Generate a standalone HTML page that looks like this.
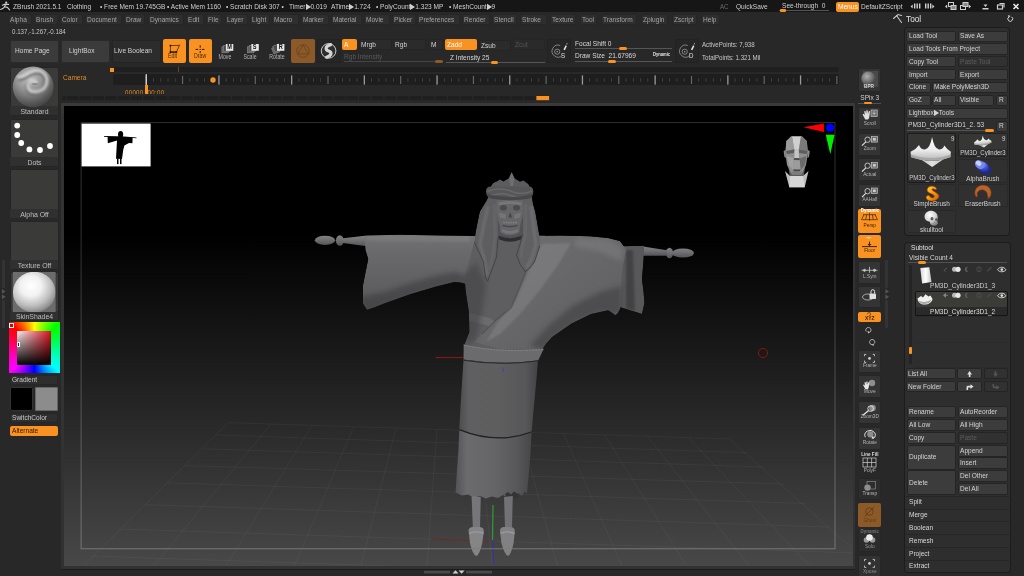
<!DOCTYPE html>
<html><head><meta charset="utf-8"><title>ZBrush</title>
<style>
html,body{margin:0;padding:0;background:#282828;}
body{width:1024px;height:576px;position:relative;overflow:hidden;font-family:"Liberation Sans",sans-serif;}
.a{position:absolute;box-sizing:border-box;}
.t{position:absolute;white-space:nowrap;transform-origin:0 50%;transform:scaleX(.82);}
svg{position:absolute;left:0;top:0;overflow:visible;}
</style></head><body>
<div class="a" style="left:0px;top:0px;width:1024px;height:12px;background:#161616;border-radius:0px;"></div>
<svg width="1024" height="576" viewBox="0 0 1024 576" style="pointer-events:none"><g fill="none" stroke="#cfcfcf" stroke-width="1.1" stroke-linecap="round" stroke-linejoin="round"><circle cx="6.2" cy="2.7" r="1.1" fill="#cfcfcf" stroke="none"/><path d="M2.4 5.2 L4.6 4.2 L8.6 4.4 M5.6 4.2 L4.6 6.8 L7.4 7.4 L9.6 9.8 M4.6 6.8 L2.8 8.6 L0.6 9.4"/></g></svg>
<span class="t" style="left:12.5px;top:1.5px;font-size:8px;line-height:10px;color:#cfcfcf;">ZBrush 2021.5.1</span>
<span class="t" style="left:67px;top:1.5px;font-size:8px;line-height:10px;color:#cfcfcf;">Clothing</span>
<span class="t" style="left:99.5px;top:1.5px;font-size:8px;line-height:10px;color:#cfcfcf;">• Free Mem 19.745GB</span>
<span class="t" style="left:167px;top:1.5px;font-size:8px;line-height:10px;color:#cfcfcf;">• Active Mem 1160</span>
<span class="t" style="left:226px;top:1.5px;font-size:8px;line-height:10px;color:#cfcfcf;">• Scratch Disk 307 •</span>
<span class="t" style="left:289px;top:1.5px;font-size:8px;line-height:10px;color:#cfcfcf;">Timer▶0.019</span>
<span class="t" style="left:330.5px;top:1.5px;font-size:8px;line-height:10px;color:#cfcfcf;">ATime▶1.724</span>
<span class="t" style="left:376px;top:1.5px;font-size:8px;line-height:10px;color:#cfcfcf;">• PolyCount▶1.323 MP</span>
<span class="t" style="left:448.5px;top:1.5px;font-size:8px;line-height:10px;color:#cfcfcf;">• MeshCount▶9</span>
<span class="t" style="left:719.5px;top:1.75px;font-size:7.5px;line-height:9.5px;color:#6a6a6a;">AC</span>
<span class="t" style="left:735.5px;top:1.5px;font-size:8px;line-height:10px;color:#cfcfcf;">QuickSave</span>
<span class="t" style="left:782px;top:0.5px;font-size:8px;line-height:10px;color:#cfcfcf;">See-through&nbsp; 0</span>
<div class="a" style="left:779px;top:10.3px;width:50px;height:0.7px;background:#555;border-radius:0px;"></div>
<div class="a" style="left:779.5px;top:9.2px;width:6.5px;height:2.4px;background:#fa9222;border-radius:1px;"></div>
<div class="a" style="left:836px;top:1.5px;width:22.5px;height:10.5px;background:#fa9222;border-radius:2px;"></div>
<span class="t" style="left:837.5px;top:1.75px;font-size:8px;line-height:10px;color:#fff;">Menus</span>
<span class="t" style="left:861px;top:1.5px;font-size:8px;line-height:10px;color:#cfcfcf;">DefaultZScript</span>
<svg width="1024" height="576" viewBox="0 0 1024 576"><g fill="#cfcfcf">
<path d="M910.5 6.5 l2.2 -2 v4z M934.5 6.5 l-2.2 -2 v4z"/>
<rect x="914" y="3.5" width="1.4" height="5"/><rect x="916.5" y="3.5" width="1.4" height="5"/><rect x="919" y="3.5" width="1.4" height="5"/>
<rect x="925" y="3.5" width="1.4" height="5"/><rect x="927.5" y="3.5" width="1.4" height="5"/><rect x="930" y="3.5" width="1.4" height="5"/>
<path d="M945 6.5 l2.2 -2 v4z M971 6.5 l-2.2 -2 v4z"/>
<rect x="948.5" y="2.5" width="5" height="4" fill="none" stroke="#cfcfcf"/><rect x="951" y="5.5" width="5" height="4" fill="#888" stroke="#cfcfcf"/>
<rect x="960.5" y="5.5" width="5" height="4" fill="none" stroke="#cfcfcf"/><rect x="963" y="2.5" width="5" height="4" fill="#888" stroke="#cfcfcf"/>
<rect x="982.5" y="8" width="6" height="1.5"/><path d="M983.5 4.5 h4 l-2 2.5z"/>
<rect x="997.5" y="5" width="5" height="4" fill="none" stroke="#cfcfcf" stroke-width="1.2"/><path d="M999.5 3.5 h4.5 v4" fill="none" stroke="#cfcfcf" stroke-width="1.2"/>
<path d="M1013.5 4 l5 5 M1018.5 4 l-5 5" stroke="#e8e8e8" stroke-width="1.6" fill="none"/>
</g></svg>
<div class="a" style="left:8.25px;top:13.5px;width:23.75px;height:11.1px;background:#2e2e2e;border-radius:2px;box-shadow:inset 0 0 0 1px #262626;"></div>
<span class="t" style="left:10.25px;top:14.5px;font-size:8px;line-height:10px;color:#a4a4a4;">Alpha</span>
<div class="a" style="left:33.7px;top:13.5px;width:24.3px;height:11.1px;background:#2e2e2e;border-radius:2px;box-shadow:inset 0 0 0 1px #262626;"></div>
<span class="t" style="left:35.7px;top:14.5px;font-size:8px;line-height:10px;color:#a4a4a4;">Brush</span>
<div class="a" style="left:60px;top:13.5px;width:22.5px;height:11.1px;background:#2e2e2e;border-radius:2px;box-shadow:inset 0 0 0 1px #262626;"></div>
<span class="t" style="left:62px;top:14.5px;font-size:8px;line-height:10px;color:#a4a4a4;">Color</span>
<div class="a" style="left:84.5px;top:13.5px;width:37.5px;height:11.1px;background:#2e2e2e;border-radius:2px;box-shadow:inset 0 0 0 1px #262626;"></div>
<span class="t" style="left:86.5px;top:14.5px;font-size:8px;line-height:10px;color:#a4a4a4;">Document</span>
<div class="a" style="left:124px;top:13.5px;width:21px;height:11.1px;background:#2e2e2e;border-radius:2px;box-shadow:inset 0 0 0 1px #262626;"></div>
<span class="t" style="left:126px;top:14.5px;font-size:8px;line-height:10px;color:#a4a4a4;">Draw</span>
<div class="a" style="left:147.5px;top:13.5px;width:36.2px;height:11.1px;background:#2e2e2e;border-radius:2px;box-shadow:inset 0 0 0 1px #262626;"></div>
<span class="t" style="left:149.5px;top:14.5px;font-size:8px;line-height:10px;color:#a4a4a4;">Dynamics</span>
<div class="a" style="left:186px;top:13.5px;width:17.7px;height:11.1px;background:#2e2e2e;border-radius:2px;box-shadow:inset 0 0 0 1px #262626;"></div>
<span class="t" style="left:188px;top:14.5px;font-size:8px;line-height:10px;color:#a4a4a4;">Edit</span>
<div class="a" style="left:205.7px;top:13.5px;width:16.8px;height:11.1px;background:#2e2e2e;border-radius:2px;box-shadow:inset 0 0 0 1px #262626;"></div>
<span class="t" style="left:207.7px;top:14.5px;font-size:8px;line-height:10px;color:#a4a4a4;">File</span>
<div class="a" style="left:224.5px;top:13.5px;width:23px;height:11.1px;background:#2e2e2e;border-radius:2px;box-shadow:inset 0 0 0 1px #262626;"></div>
<span class="t" style="left:226.5px;top:14.5px;font-size:8px;line-height:10px;color:#a4a4a4;">Layer</span>
<div class="a" style="left:249.5px;top:13.5px;width:20.5px;height:11.1px;background:#2e2e2e;border-radius:2px;box-shadow:inset 0 0 0 1px #262626;"></div>
<span class="t" style="left:251.5px;top:14.5px;font-size:8px;line-height:10px;color:#a4a4a4;">Light</span>
<div class="a" style="left:272px;top:13.5px;width:26.5px;height:11.1px;background:#2e2e2e;border-radius:2px;box-shadow:inset 0 0 0 1px #262626;"></div>
<span class="t" style="left:274px;top:14.5px;font-size:8px;line-height:10px;color:#a4a4a4;">Macro</span>
<div class="a" style="left:300.5px;top:13.5px;width:28px;height:11.1px;background:#2e2e2e;border-radius:2px;box-shadow:inset 0 0 0 1px #262626;"></div>
<span class="t" style="left:302.5px;top:14.5px;font-size:8px;line-height:10px;color:#a4a4a4;">Marker</span>
<div class="a" style="left:330.5px;top:13.5px;width:31.5px;height:11.1px;background:#2e2e2e;border-radius:2px;box-shadow:inset 0 0 0 1px #262626;"></div>
<span class="t" style="left:332.5px;top:14.5px;font-size:8px;line-height:10px;color:#a4a4a4;">Material</span>
<div class="a" style="left:364px;top:13.5px;width:26px;height:11.1px;background:#2e2e2e;border-radius:2px;box-shadow:inset 0 0 0 1px #262626;"></div>
<span class="t" style="left:366px;top:14.5px;font-size:8px;line-height:10px;color:#a4a4a4;">Movie</span>
<div class="a" style="left:391.5px;top:13.5px;width:24px;height:11.1px;background:#2e2e2e;border-radius:2px;box-shadow:inset 0 0 0 1px #262626;"></div>
<span class="t" style="left:393.5px;top:14.5px;font-size:8px;line-height:10px;color:#a4a4a4;">Picker</span>
<div class="a" style="left:417px;top:13.5px;width:43px;height:11.1px;background:#2e2e2e;border-radius:2px;box-shadow:inset 0 0 0 1px #262626;"></div>
<span class="t" style="left:419px;top:14.5px;font-size:8px;line-height:10px;color:#a4a4a4;">Preferences</span>
<div class="a" style="left:461.7px;top:13.5px;width:28.3px;height:11.1px;background:#2e2e2e;border-radius:2px;box-shadow:inset 0 0 0 1px #262626;"></div>
<span class="t" style="left:463.7px;top:14.5px;font-size:8px;line-height:10px;color:#a4a4a4;">Render</span>
<div class="a" style="left:491.7px;top:13.5px;width:25.3px;height:11.1px;background:#2e2e2e;border-radius:2px;box-shadow:inset 0 0 0 1px #262626;"></div>
<span class="t" style="left:493.7px;top:14.5px;font-size:8px;line-height:10px;color:#a4a4a4;">Stencil</span>
<div class="a" style="left:519.5px;top:13.5px;width:27.5px;height:11.1px;background:#2e2e2e;border-radius:2px;box-shadow:inset 0 0 0 1px #262626;"></div>
<span class="t" style="left:521.5px;top:14.5px;font-size:8px;line-height:10px;color:#a4a4a4;">Stroke</span>
<div class="a" style="left:549.5px;top:13.5px;width:26.5px;height:11.1px;background:#2e2e2e;border-radius:2px;box-shadow:inset 0 0 0 1px #262626;"></div>
<span class="t" style="left:551.5px;top:14.5px;font-size:8px;line-height:10px;color:#a4a4a4;">Texture</span>
<div class="a" style="left:579.5px;top:13.5px;width:17.5px;height:11.1px;background:#2e2e2e;border-radius:2px;box-shadow:inset 0 0 0 1px #262626;"></div>
<span class="t" style="left:581.5px;top:14.5px;font-size:8px;line-height:10px;color:#a4a4a4;">Tool</span>
<div class="a" style="left:601px;top:13.5px;width:36px;height:11.1px;background:#2e2e2e;border-radius:2px;box-shadow:inset 0 0 0 1px #262626;"></div>
<span class="t" style="left:603px;top:14.5px;font-size:8px;line-height:10px;color:#a4a4a4;">Transform</span>
<div class="a" style="left:641px;top:13.5px;width:27px;height:11.1px;background:#2e2e2e;border-radius:2px;box-shadow:inset 0 0 0 1px #262626;"></div>
<span class="t" style="left:643px;top:14.5px;font-size:8px;line-height:10px;color:#a4a4a4;">Zplugin</span>
<div class="a" style="left:672px;top:13.5px;width:25px;height:11.1px;background:#2e2e2e;border-radius:2px;box-shadow:inset 0 0 0 1px #262626;"></div>
<span class="t" style="left:674px;top:14.5px;font-size:8px;line-height:10px;color:#a4a4a4;">Zscript</span>
<div class="a" style="left:701px;top:13.5px;width:18.5px;height:11.1px;background:#2e2e2e;border-radius:2px;box-shadow:inset 0 0 0 1px #262626;"></div>
<span class="t" style="left:703px;top:14.5px;font-size:8px;line-height:10px;color:#a4a4a4;">Help</span>
<span class="t" style="left:11.5px;top:27.25px;font-size:7.5px;line-height:9.5px;color:#c4c4c4;">0.137<span style="color:#fa9222">,</span>-1.267<span style="color:#fa9222">,</span>-0.184</span>
<div class="a" style="left:10px;top:40px;width:48.5px;height:22.5px;background:#3b3b3b;border-radius:2px;box-shadow:inset 0 0 0 1px #2a2a2a;"></div>
<span class="t" style="left:15px;top:46.25px;font-size:8px;line-height:10px;color:#d2d2d2;">Home Page</span>
<div class="a" style="left:61px;top:40px;width:48.5px;height:22.5px;background:#3b3b3b;border-radius:2px;box-shadow:inset 0 0 0 1px #2a2a2a;"></div>
<span class="t" style="left:68.7px;top:46.25px;font-size:8px;line-height:10px;color:#d2d2d2;">LightBox</span>
<div class="a" style="left:112px;top:40px;width:48.5px;height:22.5px;background:#2c2c2c;border-radius:2px;box-shadow:inset 0 0 0 1px #242424;"></div>
<span class="t" style="left:113.7px;top:46.25px;font-size:8px;line-height:10px;color:#d2d2d2;">Live Boolean</span>
<div class="a" style="left:163.2px;top:39px;width:23.2px;height:23.8px;background:#fa9222;border-radius:2px;"></div>
<div class="a" style="left:188.7px;top:39px;width:23.4px;height:23.8px;background:#fa9222;border-radius:2px;"></div>
<svg width="1024" height="576" viewBox="0 0 1024 576">
<g stroke="#2c1a04" stroke-width="0.7" fill="none"><path d="M170.4 45.6 L179.4 45.4 L176.4 52.1 L170.4 52.1 Z"/><path d="M170.4 52.1 H176.4" stroke-width="1.3"/></g>
<g fill="#20120a"><rect x="169.6" y="44.8" width="1.6" height="1.6"/><rect x="175.6" y="51.3" width="1.6" height="1.6"/><rect x="169.6" y="51.3" width="1.6" height="1.6"/></g><rect x="178.7" y="44.7" width="1.4" height="1.4" fill="#7a4a10"/>
<g stroke="#2c1a04" stroke-width="1" fill="none"><path d="M200.2 45.3 v2.4 M200.2 51 v2.2 M195.6 49.4 h2.6 M201.8 49.4 h2.6"/><path d="M199.4 49.4 h1.6" stroke-width="0.8"/></g>
</svg>
<span class="t" style="left:168.2px;top:52.4px;font-size:6.4px;line-height:8.4px;color:#4a2a06;">Edit</span>
<span class="t" style="left:193.9px;top:52.4px;font-size:6.4px;line-height:8.4px;color:#4a2a06;">Draw</span>
<svg width="1024" height="576" viewBox="0 0 1024 576"><rect x="221.9" y="46.8" width="6.4" height="6" fill="#5a5a5a" stroke="#8e8e8e" stroke-width="0.6"/><rect x="223.7" y="45.4" width="6.4" height="6" fill="#4a4a4a" stroke="#8a8a8a" stroke-width="0.6"/><rect x="225.9" y="44" width="7.4" height="6.8" fill="#e6e6e6"/></svg>
<span class="t" style="left:225.9px;top:43.1px;font-size:6.8px;line-height:8.8px;color:#111;font-weight:bold;width:9.02px;text-align:center;">M</span>
<span class="t" style="left:212.8px;top:52.5px;font-size:6.4px;line-height:8.4px;color:#b4b4b4;width:29.27px;text-align:center;">Move</span>
<svg width="1024" height="576" viewBox="0 0 1024 576"><rect x="247.4" y="46.8" width="6.4" height="6" fill="#5a5a5a" stroke="#8e8e8e" stroke-width="0.6"/><rect x="249.2" y="45.4" width="6.4" height="6" fill="#4a4a4a" stroke="#8a8a8a" stroke-width="0.6"/><rect x="251.4" y="44" width="7.4" height="6.8" fill="#e6e6e6"/></svg>
<span class="t" style="left:251.4px;top:43.1px;font-size:6.8px;line-height:8.8px;color:#111;font-weight:bold;width:9.02px;text-align:center;">S</span>
<span class="t" style="left:238.2px;top:52.5px;font-size:6.4px;line-height:8.4px;color:#b4b4b4;width:29.27px;text-align:center;">Scale</span>
<svg width="1024" height="576" viewBox="0 0 1024 576"><g transform="rotate(-22 276.6 50.5)"><rect x="272.8" y="46.6" width="6.4" height="6.2" fill="#5a5a5a" stroke="#8e8e8e" stroke-width="0.6"/><rect x="274.6" y="45.2" width="6.4" height="6.2" fill="#4a4a4a" stroke="#8a8a8a" stroke-width="0.6"/></g><rect x="277.0" y="44" width="7.4" height="6.8" fill="#e6e6e6"/></svg>
<span class="t" style="left:277px;top:43.1px;font-size:6.8px;line-height:8.8px;color:#111;font-weight:bold;width:9.02px;text-align:center;">R</span>
<span class="t" style="left:265.2px;top:52.5px;font-size:6.4px;line-height:8.4px;color:#b4b4b4;width:29.27px;text-align:center;">Rotate</span>
<div class="a" style="left:290.9px;top:39px;width:24.2px;height:24px;background:#8c5a28;border-radius:2px;"></div>
<div class="a" style="left:316.6px;top:39px;width:24px;height:24px;background:#262626;border-radius:2px;box-shadow:inset 0 0 0 1px #222;"></div>
<svg width="1024" height="576" viewBox="0 0 1024 576">
<g stroke="#6b4520" stroke-width="0.9" fill="none"><circle cx="303" cy="51" r="6.3"/><path d="M303 45 L308.3 54 H297.7Z"/></g>
<circle cx="328.6" cy="50.9" r="7.3" fill="#2e2e2e" stroke="#dcdcdc" stroke-width="0.9"/>
<path d="M330.6 44.6 C324.6 46.4 325.4 50 328.6 51 C331.8 52 332.4 55.4 326.6 57.2" fill="none" stroke="#d4d4d4" stroke-width="3.2" stroke-linecap="round"/>
</svg>
<div class="a" style="left:342.3px;top:39.4px;width:15.1px;height:10.9px;background:#fa9222;border-radius:2px;"></div>
<span class="t" style="left:344.3px;top:39.85px;font-size:8px;line-height:10px;color:#fff;">A</span>
<div class="a" style="left:359.3px;top:39.4px;width:32.3px;height:10.9px;background:#2b2b2b;border-radius:2px;box-shadow:inset 0 0 0 1px #242424;"></div>
<span class="t" style="left:361.3px;top:39.85px;font-size:8px;line-height:10px;color:#d2d2d2;">Mrgb</span>
<div class="a" style="left:393.4px;top:39.4px;width:32.9px;height:10.9px;background:#2b2b2b;border-radius:2px;box-shadow:inset 0 0 0 1px #242424;"></div>
<span class="t" style="left:395.4px;top:39.85px;font-size:8px;line-height:10px;color:#d2d2d2;">Rgb</span>
<div class="a" style="left:427.8px;top:39.4px;width:15px;height:10.9px;background:#2b2b2b;border-radius:2px;box-shadow:inset 0 0 0 1px #242424;"></div>
<span class="t" style="left:430.8px;top:39.85px;font-size:8px;line-height:10px;color:#d2d2d2;">M</span>
<div class="a" style="left:444.6px;top:39.4px;width:32.3px;height:10.9px;background:#fa9222;border-radius:2px;"></div>
<span class="t" style="left:446.6px;top:39.85px;font-size:8px;line-height:10px;color:#fff;">Zadd</span>
<div class="a" style="left:478.8px;top:40.3px;width:32.2px;height:10.7px;background:#2b2b2b;border-radius:2px;box-shadow:inset 0 0 0 1px #242424;"></div>
<span class="t" style="left:480.8px;top:40.65px;font-size:8px;line-height:10px;color:#d2d2d2;">Zsub</span>
<div class="a" style="left:512.8px;top:39.4px;width:32.2px;height:10.9px;background:#2a2a2a;border-radius:2px;box-shadow:inset 0 0 0 1px #262626;"></div>
<span class="t" style="left:514.8px;top:39.85px;font-size:8px;line-height:10px;color:#555;">Zcut</span>
<span class="t" style="left:344px;top:51.6px;font-size:8px;line-height:10px;color:#5a5a5a;">Rgb Intensity</span>
<div class="a" style="left:344px;top:61.2px;width:99px;height:0.7px;background:#444;border-radius:0px;"></div>
<div class="a" style="left:435px;top:60px;width:8px;height:3px;background:#8c5a28;border-radius:1.5px;"></div>
<span class="t" style="left:449.7px;top:52.7px;font-size:8px;line-height:10px;color:#d8d8d8;">Z Intensity 25</span>
<div class="a" style="left:446px;top:62.3px;width:99px;height:0.7px;background:#555;border-radius:0px;"></div>
<div class="a" style="left:491px;top:61.2px;width:7px;height:3px;background:#fa9222;border-radius:1.5px;"></div>
<div class="a" style="left:547.2px;top:39px;width:23.8px;height:24.4px;background:#262626;border-radius:2px;box-shadow:inset 0 0 0 1px #222;"></div>
<div class="a" style="left:674.7px;top:39px;width:24px;height:24.4px;background:#262626;border-radius:2px;box-shadow:inset 0 0 0 1px #222;"></div>
<svg width="1024" height="576" viewBox="0 0 1024 576"><g fill="none" stroke="#9a9a9a" stroke-width="0.8"><path d="M560.2 45.5 a6 6 0 1 0 2 10"/><circle cx="557.2" cy="51.7" r="2.6"/></g><circle cx="557.2" cy="51.7" r="0.8" fill="#9a9a9a"/><path d="M563.4 49.5 l2.2 -4.2 l1.3 0.8 l-2 4.2z M566.0 44.6 l1 -1.6 l0.6 1 z" fill="#e0e0e0"/></svg>
<span class="t" style="left:561.2px;top:50.75px;font-size:7.5px;line-height:9.5px;color:#e0e0e0;">S</span>
<svg width="1024" height="576" viewBox="0 0 1024 576"><g fill="none" stroke="#9a9a9a" stroke-width="0.8"><path d="M687.7 45.5 a6 6 0 1 0 2 10"/><circle cx="684.7" cy="51.7" r="2.6"/></g><circle cx="684.7" cy="51.7" r="0.8" fill="#9a9a9a"/><path d="M690.9 49.5 l2.2 -4.2 l1.3 0.8 l-2 4.2z M693.5 44.6 l1 -1.6 l0.6 1 z" fill="#e0e0e0"/></svg>
<span class="t" style="left:688.7px;top:50.75px;font-size:7.5px;line-height:9.5px;color:#e0e0e0;">D</span>
<span class="t" style="left:574.8px;top:38.5px;font-size:8px;line-height:10px;color:#d8d8d8;">Focal Shift 0</span>
<div class="a" style="left:574.8px;top:48.3px;width:97.2px;height:0.7px;background:#555;border-radius:0px;"></div>
<div class="a" style="left:619px;top:47.2px;width:8px;height:3px;background:#fa9222;border-radius:1.5px;"></div>
<span class="t" style="left:574.8px;top:51.4px;font-size:8px;line-height:10px;color:#d8d8d8;">Draw Size&nbsp; 21.67969</span>
<div class="a" style="left:574.8px;top:61.2px;width:97.2px;height:0.7px;background:#555;border-radius:0px;"></div>
<div class="a" style="left:607.8px;top:60px;width:7.8px;height:3px;background:#fa9222;border-radius:1.5px;"></div>
<span class="t" style="left:652.8px;top:51.1px;font-size:5px;line-height:7px;color:#e6e6e6;font-weight:bold;">Dynamic</span>
<span class="t" style="left:702.3px;top:39.85px;font-size:7.5px;line-height:9.5px;color:#c8c8c8;">ActivePoints: 7,938</span>
<span class="t" style="left:702.3px;top:52.75px;font-size:7.5px;line-height:9.5px;color:#c8c8c8;">TotalPoints: 1.321 Mil</span>
<span class="t" style="left:63px;top:73px;font-size:8px;line-height:10px;color:#e08a24;">Camera</span>
<div class="a" style="left:112.5px;top:67px;width:726px;height:5px;background:#1f1f1f;border-radius:1.5px;"></div>
<div class="a" style="left:109.5px;top:68px;width:4.5px;height:4px;background:#fa9222;border-radius:0px;"></div>
<div class="a" style="left:178px;top:67px;width:0.8px;height:5px;background:#6b4520;border-radius:0px;"></div>
<div class="a" style="left:112.5px;top:73.5px;width:726px;height:11.8px;background:#1e1e1e;border-radius:2px;"></div>
<svg width="1024" height="576" viewBox="0 0 1024 576"><rect x="145.60" y="75.4" width="1.3" height="9.2" fill="#9a9a9a"/><rect x="153.12" y="78.4" width="0.7" height="3.2" fill="#4e4e4e"/><rect x="160.39" y="78.4" width="0.7" height="3.2" fill="#4e4e4e"/><rect x="167.66" y="78.4" width="0.7" height="3.2" fill="#4e4e4e"/><rect x="174.93" y="78.4" width="0.7" height="3.2" fill="#4e4e4e"/><rect x="182.05" y="76" width="1.1" height="8" fill="#6a6a6a"/><rect x="189.47" y="78.4" width="0.7" height="3.2" fill="#4e4e4e"/><rect x="196.74" y="78.4" width="0.7" height="3.2" fill="#4e4e4e"/><rect x="204.01" y="78.4" width="0.7" height="3.2" fill="#4e4e4e"/><rect x="211.28" y="78.4" width="0.7" height="3.2" fill="#4e4e4e"/><rect x="218.30" y="75.4" width="1.3" height="9.2" fill="#9a9a9a"/><rect x="225.82" y="78.4" width="0.7" height="3.2" fill="#4e4e4e"/><rect x="233.09" y="78.4" width="0.7" height="3.2" fill="#4e4e4e"/><rect x="240.36" y="78.4" width="0.7" height="3.2" fill="#4e4e4e"/><rect x="247.63" y="78.4" width="0.7" height="3.2" fill="#4e4e4e"/><rect x="254.75" y="76" width="1.1" height="8" fill="#6a6a6a"/><rect x="262.17" y="78.4" width="0.7" height="3.2" fill="#4e4e4e"/><rect x="269.44" y="78.4" width="0.7" height="3.2" fill="#4e4e4e"/><rect x="276.71" y="78.4" width="0.7" height="3.2" fill="#4e4e4e"/><rect x="283.98" y="78.4" width="0.7" height="3.2" fill="#4e4e4e"/><rect x="291.00" y="75.4" width="1.3" height="9.2" fill="#9a9a9a"/><rect x="298.52" y="78.4" width="0.7" height="3.2" fill="#4e4e4e"/><rect x="305.79" y="78.4" width="0.7" height="3.2" fill="#4e4e4e"/><rect x="313.06" y="78.4" width="0.7" height="3.2" fill="#4e4e4e"/><rect x="320.33" y="78.4" width="0.7" height="3.2" fill="#4e4e4e"/><rect x="327.45" y="76" width="1.1" height="8" fill="#6a6a6a"/><rect x="334.87" y="78.4" width="0.7" height="3.2" fill="#4e4e4e"/><rect x="342.14" y="78.4" width="0.7" height="3.2" fill="#4e4e4e"/><rect x="349.41" y="78.4" width="0.7" height="3.2" fill="#4e4e4e"/><rect x="356.68" y="78.4" width="0.7" height="3.2" fill="#4e4e4e"/><rect x="363.70" y="75.4" width="1.3" height="9.2" fill="#9a9a9a"/><rect x="371.22" y="78.4" width="0.7" height="3.2" fill="#4e4e4e"/><rect x="378.49" y="78.4" width="0.7" height="3.2" fill="#4e4e4e"/><rect x="385.76" y="78.4" width="0.7" height="3.2" fill="#4e4e4e"/><rect x="393.03" y="78.4" width="0.7" height="3.2" fill="#4e4e4e"/><rect x="400.15" y="76" width="1.1" height="8" fill="#6a6a6a"/><rect x="407.57" y="78.4" width="0.7" height="3.2" fill="#4e4e4e"/><rect x="414.84" y="78.4" width="0.7" height="3.2" fill="#4e4e4e"/><rect x="422.11" y="78.4" width="0.7" height="3.2" fill="#4e4e4e"/><rect x="429.38" y="78.4" width="0.7" height="3.2" fill="#4e4e4e"/><rect x="436.40" y="75.4" width="1.3" height="9.2" fill="#9a9a9a"/><rect x="443.92" y="78.4" width="0.7" height="3.2" fill="#4e4e4e"/><rect x="451.19" y="78.4" width="0.7" height="3.2" fill="#4e4e4e"/><rect x="458.46" y="78.4" width="0.7" height="3.2" fill="#4e4e4e"/><rect x="465.73" y="78.4" width="0.7" height="3.2" fill="#4e4e4e"/><rect x="472.85" y="76" width="1.1" height="8" fill="#6a6a6a"/><rect x="480.27" y="78.4" width="0.7" height="3.2" fill="#4e4e4e"/><rect x="487.54" y="78.4" width="0.7" height="3.2" fill="#4e4e4e"/><rect x="494.81" y="78.4" width="0.7" height="3.2" fill="#4e4e4e"/><rect x="502.08" y="78.4" width="0.7" height="3.2" fill="#4e4e4e"/><rect x="509.10" y="75.4" width="1.3" height="9.2" fill="#9a9a9a"/><rect x="516.62" y="78.4" width="0.7" height="3.2" fill="#4e4e4e"/><rect x="523.89" y="78.4" width="0.7" height="3.2" fill="#4e4e4e"/><rect x="531.16" y="78.4" width="0.7" height="3.2" fill="#4e4e4e"/><rect x="538.43" y="78.4" width="0.7" height="3.2" fill="#4e4e4e"/><rect x="545.55" y="76" width="1.1" height="8" fill="#6a6a6a"/><rect x="552.97" y="78.4" width="0.7" height="3.2" fill="#4e4e4e"/><rect x="560.24" y="78.4" width="0.7" height="3.2" fill="#4e4e4e"/><rect x="567.51" y="78.4" width="0.7" height="3.2" fill="#4e4e4e"/><rect x="574.78" y="78.4" width="0.7" height="3.2" fill="#4e4e4e"/><rect x="581.80" y="75.4" width="1.3" height="9.2" fill="#9a9a9a"/><rect x="589.32" y="78.4" width="0.7" height="3.2" fill="#4e4e4e"/><rect x="596.59" y="78.4" width="0.7" height="3.2" fill="#4e4e4e"/><rect x="603.86" y="78.4" width="0.7" height="3.2" fill="#4e4e4e"/><rect x="611.13" y="78.4" width="0.7" height="3.2" fill="#4e4e4e"/><rect x="618.25" y="76" width="1.1" height="8" fill="#6a6a6a"/><rect x="625.67" y="78.4" width="0.7" height="3.2" fill="#4e4e4e"/><rect x="632.94" y="78.4" width="0.7" height="3.2" fill="#4e4e4e"/><rect x="640.21" y="78.4" width="0.7" height="3.2" fill="#4e4e4e"/><rect x="647.48" y="78.4" width="0.7" height="3.2" fill="#4e4e4e"/><rect x="654.50" y="75.4" width="1.3" height="9.2" fill="#9a9a9a"/><rect x="662.02" y="78.4" width="0.7" height="3.2" fill="#4e4e4e"/><rect x="669.29" y="78.4" width="0.7" height="3.2" fill="#4e4e4e"/><rect x="676.56" y="78.4" width="0.7" height="3.2" fill="#4e4e4e"/><rect x="683.83" y="78.4" width="0.7" height="3.2" fill="#4e4e4e"/><rect x="690.95" y="76" width="1.1" height="8" fill="#6a6a6a"/><rect x="698.37" y="78.4" width="0.7" height="3.2" fill="#4e4e4e"/><rect x="705.64" y="78.4" width="0.7" height="3.2" fill="#4e4e4e"/><rect x="712.91" y="78.4" width="0.7" height="3.2" fill="#4e4e4e"/><rect x="720.18" y="78.4" width="0.7" height="3.2" fill="#4e4e4e"/><rect x="727.20" y="75.4" width="1.3" height="9.2" fill="#9a9a9a"/><rect x="734.72" y="78.4" width="0.7" height="3.2" fill="#4e4e4e"/><rect x="741.99" y="78.4" width="0.7" height="3.2" fill="#4e4e4e"/><rect x="749.26" y="78.4" width="0.7" height="3.2" fill="#4e4e4e"/><rect x="756.53" y="78.4" width="0.7" height="3.2" fill="#4e4e4e"/><rect x="763.65" y="76" width="1.1" height="8" fill="#6a6a6a"/><rect x="771.07" y="78.4" width="0.7" height="3.2" fill="#4e4e4e"/><rect x="778.34" y="78.4" width="0.7" height="3.2" fill="#4e4e4e"/><rect x="785.61" y="78.4" width="0.7" height="3.2" fill="#4e4e4e"/><rect x="792.88" y="78.4" width="0.7" height="3.2" fill="#4e4e4e"/><rect x="799.90" y="75.4" width="1.3" height="9.2" fill="#9a9a9a"/><rect x="807.42" y="78.4" width="0.7" height="3.2" fill="#4e4e4e"/><rect x="814.69" y="78.4" width="0.7" height="3.2" fill="#4e4e4e"/><rect x="821.96" y="78.4" width="0.7" height="3.2" fill="#4e4e4e"/><rect x="829.23" y="78.4" width="0.7" height="3.2" fill="#4e4e4e"/><rect x="836.35" y="76" width="1.1" height="8" fill="#6a6a6a"/><rect x="145.7" y="74" width="1" height="11" fill="#e8e8e8"/><circle cx="213" cy="80" r="2.7" fill="#fa9222"/><rect x="145" y="85" width="3" height="9" fill="#fa9222"/></svg>
<div class="a" style="left:120px;top:86px;width:60px;height:8px;overflow:hidden"><span class="t" style="left:5px;top:1.5px;font-size:7.5px;line-height:10px;color:#e08a24;letter-spacing:0.35px">00000&nbsp; 00:00</span></div>
<svg width="1024" height="576" viewBox="0 0 1024 576"><rect x="524.20" y="96.2" width="11.50" height="3.9" fill="#1f1f1f"/><rect x="511.50" y="96.2" width="11.50" height="3.9" fill="#1f1f1f"/><rect x="498.80" y="96.2" width="11.50" height="3.9" fill="#1f1f1f"/><rect x="486.10" y="96.2" width="11.50" height="3.9" fill="#1f1f1f"/><rect x="473.40" y="96.2" width="11.50" height="3.9" fill="#1f1f1f"/><rect x="460.70" y="96.2" width="11.50" height="3.9" fill="#1f1f1f"/><rect x="448.00" y="96.2" width="11.50" height="3.9" fill="#1f1f1f"/><rect x="435.30" y="96.2" width="11.50" height="3.9" fill="#1f1f1f"/><rect x="422.60" y="96.2" width="11.50" height="3.9" fill="#1f1f1f"/><rect x="409.90" y="96.2" width="11.50" height="3.9" fill="#1f1f1f"/><rect x="397.20" y="96.2" width="11.50" height="3.9" fill="#1f1f1f"/><rect x="384.50" y="96.2" width="11.50" height="3.9" fill="#1f1f1f"/><rect x="371.80" y="96.2" width="11.50" height="3.9" fill="#1f1f1f"/><rect x="359.10" y="96.2" width="11.50" height="3.9" fill="#1f1f1f"/><rect x="346.40" y="96.2" width="11.50" height="3.9" fill="#1f1f1f"/><rect x="333.70" y="96.2" width="11.50" height="3.9" fill="#1f1f1f"/><rect x="321.00" y="96.2" width="11.50" height="3.9" fill="#1f1f1f"/><rect x="308.30" y="96.2" width="11.50" height="3.9" fill="#1f1f1f"/><rect x="295.60" y="96.2" width="11.50" height="3.9" fill="#1f1f1f"/><rect x="282.90" y="96.2" width="11.50" height="3.9" fill="#1f1f1f"/><rect x="270.20" y="96.2" width="11.50" height="3.9" fill="#1f1f1f"/><rect x="257.50" y="96.2" width="11.50" height="3.9" fill="#1f1f1f"/><rect x="244.80" y="96.2" width="11.50" height="3.9" fill="#1f1f1f"/><rect x="232.10" y="96.2" width="11.50" height="3.9" fill="#1f1f1f"/><rect x="219.40" y="96.2" width="11.50" height="3.9" fill="#1f1f1f"/><rect x="206.70" y="96.2" width="11.50" height="3.9" fill="#1f1f1f"/><rect x="194.00" y="96.2" width="11.50" height="3.9" fill="#1f1f1f"/><rect x="181.30" y="96.2" width="11.50" height="3.9" fill="#1f1f1f"/><rect x="168.60" y="96.2" width="11.50" height="3.9" fill="#1f1f1f"/><rect x="155.90" y="96.2" width="11.50" height="3.9" fill="#1f1f1f"/><rect x="143.20" y="96.2" width="11.50" height="3.9" fill="#1f1f1f"/><rect x="130.50" y="96.2" width="11.50" height="3.9" fill="#1f1f1f"/><rect x="117.80" y="96.2" width="11.50" height="3.9" fill="#1f1f1f"/><rect x="105.10" y="96.2" width="11.50" height="3.9" fill="#1f1f1f"/><rect x="92.40" y="96.2" width="11.50" height="3.9" fill="#1f1f1f"/><rect x="79.70" y="96.2" width="11.50" height="3.9" fill="#1f1f1f"/><rect x="67.00" y="96.2" width="11.50" height="3.9" fill="#1f1f1f"/><rect x="62.70" y="96.2" width="3.10" height="3.9" fill="#1f1f1f"/><rect x="536.4" y="96" width="12.7" height="4.2" fill="#fa9222"/></svg>
<div class="a" style="left:9.6px;top:67px;width:49px;height:49px;background:#3a3a38;border-radius:2px;box-shadow:inset 0 0 0 1px #252525;"></div>
<div class="a" style="left:10.4px;top:106.4px;width:47.4px;height:8.8px;background:#303030;border-radius:1px;"></div>
<span class="t" style="left:9.6px;top:107.3px;font-size:8px;line-height:10px;color:#bdbdbd;width:56.98px;text-align:center;transform:scaleX(.86);">Standard</span>
<div class="a" style="left:9.6px;top:118.7px;width:49px;height:48.3px;background:#3a3a38;border-radius:2px;box-shadow:inset 0 0 0 1px #252525;"></div>
<div class="a" style="left:10.4px;top:157.4px;width:47.4px;height:8.8px;background:#303030;border-radius:1px;"></div>
<span class="t" style="left:9.6px;top:158.3px;font-size:8px;line-height:10px;color:#bdbdbd;width:56.98px;text-align:center;transform:scaleX(.86);">Dots</span>
<div class="a" style="left:9.6px;top:169.4px;width:49px;height:49px;background:#3a3a38;border-radius:2px;box-shadow:inset 0 0 0 1px #252525;"></div>
<div class="a" style="left:10.4px;top:208.8px;width:47.4px;height:8.8px;background:#303030;border-radius:1px;"></div>
<span class="t" style="left:9.6px;top:209.7px;font-size:8px;line-height:10px;color:#bdbdbd;width:56.98px;text-align:center;transform:scaleX(.86);">Alpha Off</span>
<div class="a" style="left:9.6px;top:221px;width:49px;height:49px;background:#3a3a38;border-radius:2px;box-shadow:inset 0 0 0 1px #252525;"></div>
<div class="a" style="left:10.4px;top:260.4px;width:47.4px;height:8.8px;background:#303030;border-radius:1px;"></div>
<span class="t" style="left:9.6px;top:261.3px;font-size:8px;line-height:10px;color:#bdbdbd;width:56.98px;text-align:center;transform:scaleX(.86);">Texture Off</span>
<div class="a" style="left:9.6px;top:271.6px;width:49px;height:49.4px;background:#3a3a38;border-radius:2px;box-shadow:inset 0 0 0 1px #252525;"></div>
<div class="a" style="left:10.4px;top:311.4px;width:47.4px;height:8.8px;background:#303030;border-radius:1px;"></div>
<span class="t" style="left:9.6px;top:312.3px;font-size:8px;line-height:10px;color:#bdbdbd;width:56.98px;text-align:center;transform:scaleX(.86);">SkinShade4</span>
<svg width="1024" height="576" viewBox="0 0 1024 576">
<defs>
<radialGradient id="gstd" cx="0.4" cy="0.28" r="0.8"><stop offset="0" stop-color="#c2c2c2"/><stop offset="0.4" stop-color="#949494"/><stop offset="0.75" stop-color="#5c5c5c"/><stop offset="1" stop-color="#383838"/></radialGradient>
<radialGradient id="gskin" cx="0.42" cy="0.35" r="0.7"><stop offset="0" stop-color="#ffffff"/><stop offset="0.35" stop-color="#f2f2f2"/><stop offset="0.7" stop-color="#bcbcbc"/><stop offset="1" stop-color="#7a7a7a"/></radialGradient>
</defs>
<filter id="lb1" x="-20%" y="-20%" width="140%" height="140%"><feGaussianBlur stdDeviation="0.8"/></filter>
<clipPath id="stdclip"><circle cx="33.2" cy="86.8" r="20.4"/></clipPath>
<circle cx="33.2" cy="86.8" r="20.4" fill="url(#gstd)"/>
<g clip-path="url(#stdclip)" fill="none" stroke-linecap="round">
<path d="M19.6 79.4 C 25 80.5, 29 73.6, 37 73 C 44 73, 46.5 79, 45 84.5 C 43.5 91, 37 94.6, 31.4 93.2 C 26 91.6, 25.4 85, 29 82.6" stroke="#3c3c3c" stroke-width="2.6" opacity="0.55" filter="url(#lb1)"/>
<path d="M18.6 77 C 24 78, 28 71, 36 70.5 C 44 70.5, 48 77, 46.5 83 C 45 90, 38 93, 32 91.5 C 27 90, 26.5 84, 30 81.5 C 32.5 80, 35.5 80.5, 36 82.5" stroke="#d6d6d6" stroke-width="3.6" opacity="0.8" filter="url(#lb1)"/>
<path d="M33 84.6 C 34 83.4, 36 83.4, 37 84.4" stroke="#4a4a4a" stroke-width="1.8" opacity="0.7" filter="url(#lb1)"/>
</g>
<g fill="#fff"><circle cx="17.2" cy="125.6" r="2.9"/><circle cx="17.2" cy="135" r="2.9"/><circle cx="21.2" cy="143" r="2.9"/><circle cx="29.4" cy="149.4" r="2.9"/><circle cx="40" cy="150" r="2.9"/><circle cx="50" cy="146" r="2.9"/></g>
<rect x="12.8" y="272" width="42.8" height="40" fill="#6c6c6c"/>
<clipPath id="skclip"><rect x="12.8" y="272" width="42.8" height="40"/></clipPath><ellipse cx="34.2" cy="292.2" rx="21.3" ry="20.4" fill="url(#gskin)" clip-path="url(#skclip)"/>
</svg>
<div class="a" style="left:8.6px;top:322px;width:51.6px;height:51px;background:conic-gradient(from 315deg at 50% 50%, #ff0000, #ffff00 12.5%, #00ff00 25%, #00ffff 50%, #0000ff 62.5%, #ff00ff 75%, #ff0000);"></div>
<div class="a" style="left:17px;top:330.5px;width:34px;height:34.5px;background:linear-gradient(to bottom, rgba(0,0,0,0), #000), linear-gradient(to right, #f4f4f4, #e01020);"></div>
<div class="a" style="left:9px;top:323px;width:5px;height:5px;border:1px solid #fff;background:#e00000"></div>
<div class="a" style="left:16.5px;top:342px;width:3px;height:5px;border:0.7px solid #fff;background:#222"></div>
<div class="a" style="left:9.5px;top:375px;width:48.9px;height:9.5px;background:#2e2e2e;border-radius:2px;box-shadow:inset 0 0 0 1px #262626;"></div>
<span class="t" style="left:11.5px;top:374.75px;font-size:8px;line-height:10px;color:#c8c8c8;">Gradient</span>
<div class="a" style="left:9.5px;top:387px;width:23.9px;height:23.8px;background:#000;border-radius:2px;box-shadow:inset 0 0 0 1px #333;"></div>
<div class="a" style="left:35.4px;top:387px;width:23px;height:23.8px;background:#8c8c8c;border-radius:2px;box-shadow:inset 0 0 0 1px #666;"></div>
<div class="a" style="left:9.5px;top:413.4px;width:48.9px;height:9.8px;background:#2e2e2e;border-radius:2px;box-shadow:inset 0 0 0 1px #262626;"></div>
<span class="t" style="left:11.5px;top:413.3px;font-size:8px;line-height:10px;color:#c8c8c8;">SwitchColor</span>
<div class="a" style="left:9.5px;top:426px;width:48.9px;height:10.4px;background:#fa9222;border-radius:2px;"></div>
<span class="t" style="left:11.5px;top:426.2px;font-size:8px;line-height:10px;color:#2a1600;">Alternate</span>
<div class="a" style="left:1.9px;top:260px;width:3.1px;height:28px;background:#333;border-radius:1px;"></div>
<div class="a" style="left:1.9px;top:300px;width:3.1px;height:28px;background:#333;border-radius:1px;"></div>
<svg width="1024" height="576" viewBox="0 0 1024 576"><path d="M5.6 291.4 l-3.6 -2.4 v4.8z M5.6 296.8 l-3.6 -2.4 v4.8z" fill="#555"/></svg>
<div class="a" style="left:61.2px;top:103px;width:794.3px;height:567px;height:467px;background:#1c1c1c;border-radius:1px"></div>
<div class="a" style="left:61.2px;top:103px;width:794.3px;height:465.6px;background:linear-gradient(to bottom,#3a3a3a,#333 3%,#323232 100%);border-radius:1px"></div>
<div class="a" style="left:64px;top:106px;width:788.6px;height:459.7px;background:linear-gradient(to bottom,#000 0%,#000 28%,#484848 100%);"></div>
<svg width="1024" height="576" viewBox="0 0 1024 576"><defs>
<clipPath id="cvclip"><rect x="64" y="106" width="788.6" height="459.7"/></clipPath>
<linearGradient id="gfr" gradientUnits="userSpaceOnUse" x1="0" y1="122" x2="0" y2="549"><stop offset="0" stop-color="#343434"/><stop offset="0.3" stop-color="#363636"/><stop offset="1" stop-color="#7c7c7c"/></linearGradient>
<filter id="b1" x="-20%" y="-20%" width="140%" height="140%"><feGaussianBlur stdDeviation="1.2"/></filter>
<filter id="b2" x="-20%" y="-20%" width="140%" height="140%"><feGaussianBlur stdDeviation="2.5"/></filter>
<filter id="b05" x="-20%" y="-20%" width="140%" height="140%"><feGaussianBlur stdDeviation="0.6"/></filter>
<linearGradient id="gsl" x1="0" y1="0" x2="0" y2="1"><stop offset="0" stop-color="#727274"/><stop offset="0.25" stop-color="#69696b"/><stop offset="0.75" stop-color="#5e5e60"/><stop offset="1" stop-color="#545456"/></linearGradient>
<linearGradient id="gsk1" x1="0" y1="0" x2="1" y2="0"><stop offset="0" stop-color="#4d4d4e"/><stop offset="0.12" stop-color="#5f5f61"/><stop offset="0.5" stop-color="#5e5e5f"/><stop offset="0.85" stop-color="#565658"/><stop offset="1" stop-color="#434345"/></linearGradient>
<linearGradient id="gsk2" x1="0" y1="0" x2="1" y2="0"><stop offset="0" stop-color="#545456"/><stop offset="0.15" stop-color="#6b6b6d"/><stop offset="0.5" stop-color="#656567"/><stop offset="0.8" stop-color="#58585a"/><stop offset="1" stop-color="#474749"/></linearGradient>
<linearGradient id="grod" x1="0" y1="0" x2="0" y2="1"><stop offset="0" stop-color="#818183"/><stop offset="0.5" stop-color="#6e6e70"/><stop offset="1" stop-color="#545456"/></linearGradient>
<linearGradient id="gdrape" x1="0" y1="0" x2="1" y2="1"><stop offset="0" stop-color="#707072"/><stop offset="0.5" stop-color="#676769"/><stop offset="1" stop-color="#5c5c5e"/></linearGradient>
<linearGradient id="ghead" x1="0" y1="0" x2="1" y2="0"><stop offset="0" stop-color="#b8b8b8"/><stop offset="0.5" stop-color="#8a8a8a"/><stop offset="1" stop-color="#5a5a5a"/></linearGradient>
</defs><g clip-path="url(#cvclip)"><path d="M228 422.6 L83.4 566 M271 424 L153.7 566 M312 425.4 L226 566 M353.7 426.7 L294.4 566 M396 428.1 L360.8 566 M437 429.4 L427 566 M478.5 430.8 L492.5 566 M520.5 432.2 L557.5 566 M563.5 433.6 L622 566 M604.5 434.9 L686.5 566 M647.5 436.3 L749 566 M688.5 437.7 L809.6 566 M729.5 439 L872 566 M228 422.6 L729.5 439 M216 435 L747 452.7 M202.6 448.8 L764.7 467 M185 465.6 L784 484 M167.4 482.8 L805.7 503.5 M146 504.7 L829 527 M118.6 529 L857 553 M91 556 L890 583" stroke="#ffffff" stroke-opacity="0.052" stroke-width="0.9" fill="none"/></g><path d="M431 539 L490 541.3" stroke="#7c2019" stroke-width="0.8"/><defs><clipPath id="figclip"><path d="M616 246.3 L644.5 245.8 L643.4 262 L642 279 L643.6 292 L644.5 303 L642 314 L634 311.5 L626 309 L616 306 Z"/><path d="M364.3 235.6 L400 234.8 L440 235.4 L478 236 L490 240 L480 275 L466 284 L460.7 282.5 L454.2 282 L436 286.4 L410 294.2 L384 303.4 L374 307.4 L367 309.8 L363 303.4 L363 285 L366 270 L368.2 259 L365.4 250 Z"/><path d="M476 235.6 L545 235.6 L552 290 L546 343 L541 352 L500 354 L464.6 347 L464.6 344.2 L469.4 332 L469 312.6 L466 293 L464.6 279 Z"/><path d="M530 236 L560 235.4 L590 236.2 L608 238 L620 241 L626.2 249.4 L623 265 L621.4 278.6 L621.6 296 L620 309 L617.6 313.4 L615.3 315.2 L611 312 L608 310.2 L591 313.9 L571.5 323.6 L552 337 L541 349.5 L500 349 L474 341.8 L482 334 L496 320 L510.8 307.8 L521 284 L530 261.6 L538 248Z"/><path d="M488.7 197 L497.8 199 L498.2 237 L496.5 257 L491 272 L487.6 281.5 L485.5 277 L483.5 262 L478 250 L474.4 242 L475.5 232.7 L479.7 211.8Z"/><path d="M531 197 L523.2 199 L522.8 234 L519.5 246 L516.5 255 L520 264 L525.2 271.5 L530 268 L534.5 262 L539.8 246 L539.4 235.4 L535.3 211.8Z"/><rect x="487" y="196" width="46" height="44"/></clipPath></defs><g><g fill="url(#grod)"><ellipse cx="325" cy="240.3" rx="10.2" ry="4.6"/><ellipse cx="339.8" cy="240.5" rx="3.9" ry="5.3"/><path d="M365 235.8 L343 238.2 L343 243 L365 246Z"/><ellipse cx="683" cy="253" rx="11" ry="4.6"/><ellipse cx="669.5" cy="253" rx="3.6" ry="5.2"/><path d="M643 246.4 L667 250.2 L667 255.8 L643 255.8Z"/></g><g clip-path="url(#figclip)"><path d="M616 246.3 L644.5 245.8 L643.4 262 L642 279 L643.6 292 L644.5 303 L642 314 L634 311.5 L626 309 L616 306 Z" fill="#58585a"/><path d="M626 250 L633 250 L635 311 L626 309Z" fill="#434345" filter="url(#b1)"/><path d="M364.3 235.6 L400 234.8 L440 235.4 L478 236 L490 240 L480 275 L466 284 L460.7 282.5 L454.2 282 L436 286.4 L410 294.2 L384 303.4 L374 307.4 L367 309.8 L363 303.4 L363 285 L366 270 L368.2 259 L365.4 250 Z" fill="url(#gsl)"/><path d="M476 235.6 L545 235.6 L552 290 L546 343 L541 352 L500 354 L464.6 347 L464.6 344.2 L469.4 332 L469 312.6 L466 293 L464.6 279 Z" fill="#5e5e60"/><path d="M469 312.6 L490 318 L503 327 L500 333 L486 325 L469.4 321Z" fill="#6e6e70" opacity="0.8" filter="url(#b05)"/><path d="M530 236 L560 235.4 L590 236.2 L608 238 L620 241 L626.2 249.4 L623 265 L621.4 278.6 L621.6 296 L620 309 L617.6 313.4 L615.3 315.2 L611 312 L608 310.2 L591 313.9 L571.5 323.6 L552 337 L541 349.5 L500 349 L474 341.8 L482 334 L496 320 L510.8 307.8 L521 284 L530 261.6 L538 248Z" fill="url(#gdrape)"/><path d="M571 243 L560 262 L540 290 L520 314 L500 334 L486 342 L498 322 L514 304 L524 282 L534 258 L542 244Z" fill="#909092" opacity="0.4" filter="url(#b1)"/><path d="M530 262 L521 284 L511 308 L496 320 L482 334" stroke="#454547" stroke-width="1.4" fill="none" opacity="0.5" filter="url(#b05)"/><path d="M544 350 L556 336 L573 324 L592 315 L608 311.5 L616 316 L621 310 L622 286 L600 292 L572 306 L548 326 L530 346Z" fill="#404042" opacity="0.6" filter="url(#b2)"/><path d="M575 238 L610 240 L623 248 L622 262 L600 252 L575 247Z" fill="#878789" opacity="0.4" filter="url(#b2)"/><path d="M360 297 L384 292 L410 283 L436 275.5 L456 272 L466 278 L456 285 L436 290 L410 298 L384 307 L367 313 L360 306Z" fill="#3e3e3f" opacity="0.6" filter="url(#b2)"/><path d="M366 234 L470 235 L470 242 L366 241Z" fill="#838385" opacity="0.5" filter="url(#b1)"/><path d="M460 280 L476 262 L486 285 L482 312 L476 340 L464.6 346 L465 332 L465 312.6 L462 293Z" fill="#414143" opacity="0.55" filter="url(#b2)"/><path d="M488 196 L532 196 L534 238 L486 238Z" fill="#525254"/><path d="M488.7 197 L497.8 199 L498.2 237 L496.5 257 L491 272 L487.6 281.5 L485.5 277 L483.5 262 L478 250 L474.4 242 L475.5 232.7 L479.7 211.8Z" fill="#5e5e60"/><path d="M531 197 L523.2 199 L522.8 234 L519.5 246 L516.5 255 L520 264 L525.2 271.5 L530 268 L534.5 262 L539.8 246 L539.4 235.4 L535.3 211.8Z" fill="#606062"/><path d="M488 206 L484 224 L480 244 L484 258 L487.4 276" stroke="#78787a" stroke-width="3" fill="none" opacity="0.6" filter="url(#b1)"/><path d="M494.5 204 L495 236 L493 256 L489.5 270" stroke="#727274" stroke-width="2.4" fill="none" opacity="0.55" filter="url(#b1)"/><path d="M531 206 L533.5 226 L536 244 L532 258 L526.4 268" stroke="#7a7a7c" stroke-width="3" fill="none" opacity="0.6" filter="url(#b1)"/><path d="M526 204 L525.6 234 L521.6 250 L521 258" stroke="#727274" stroke-width="2.2" fill="none" opacity="0.55" filter="url(#b1)"/><path d="M474.4 242 L478 250 L483.5 262 L485.5 277 L487.6 281.5 L491 272 L496.5 257 L498.2 237" stroke="#3a3a3c" stroke-width="1" fill="none" opacity="0.7" filter="url(#b05)"/><path d="M539.8 246 L534.5 262 L530 268 L525.2 271.5 L520 264 L516.5 255 L519.5 246 L522.8 234" stroke="#3a3a3c" stroke-width="1" fill="none" opacity="0.7" filter="url(#b05)"/></g><path d="M463.7 344.4 Q498 352.4 543.8 348.8 L538.2 360.6 Q500 365.4 463.5 359.6 Z" fill="#6b6b6d"/><path d="M463.7 345 Q498 353 543.8 349.4" stroke="#8a8a8c" stroke-width="0.8" stroke-dasharray="2 1" fill="none"/><path d="M463.5 359.8 Q500 365.6 538 360.4 L536.4 380 L533.6 410 L531.6 431.6 Q497 444.6 459.3 429.2 L460.6 405 L462.2 380Z" fill="url(#gsk1)"/><path d="M463.5 360.2 Q500 366 538 360.8" stroke="#29292b" stroke-width="1.1" fill="none"/><path d="M459.3 429.4 Q497 444.8 531.6 431.8 L530.4 455 L528.4 478 L527 493.5 L524.5 491.5 L522 496 L519 493 L516 497 L512 494.5 L508 497.5 L503 495 L498 498 L492 496.5 L486 498.5 L480 496 L474 497.5 L468 494.5 L462 495.5 L455.6 492.5 L457 470 L458.4 450Z" fill="url(#gsk2)"/><path d="M459.3 429.6 Q497 445 531.6 432" stroke="#212123" stroke-width="1.2" fill="none"/><path d="M505 494 l3 -2 l3 2.5 l3 -3 l3.5 2 l2 3 l-5 2 l-4 0 l-4 -1z" fill="#343436"/><path d="M471.6 496 L480.8 497 L480 527 L472.8 527Z" fill="#767678"/><path d="M504 497 L512.8 496 L512 527 L505 527Z" fill="#727274"/><path d="M468.6 531 Q468.2 527.4 472.5 527 L480 527 Q484 527.4 483.8 531.5 L482.3 543 Q479.5 555 476.4 556 Q472.6 555 470 543Z" fill="#858587"/><path d="M500 531 Q499.7 527.4 504 527 L511 527 Q515 527.4 514.8 531.5 L513.6 543 Q511 555 508 556 Q504.6 555 501.4 543Z" fill="#818183"/><path d="M469.2 533.4 Q476 530.4 483.6 533.4 M500.6 533.4 Q507 530.4 514.6 533.4" stroke="#9d9d9f" stroke-width="1.3" fill="none"/><path d="M496.4 203 Q496.6 198.8 500 198.8 L520 198.8 Q523.5 198.8 523.5 203 L523.2 214 L521.4 221 L520 226 L519.6 232 Q516 235.2 510 235.2 Q503.8 235.2 500.2 232 L499.9 226 L498.4 221 L496.7 214Z" fill="#666668"/><path d="M498.6 202.6 Q510 199.6 521.4 202.6 L521 205.2 Q510 202.6 499 205.2Z" fill="#7c7c7e" opacity="0.8" filter="url(#b05)"/><ellipse cx="503.4" cy="207.8" rx="3.5" ry="2.8" fill="#4c4c4e"/><ellipse cx="516.5" cy="207.8" rx="3.5" ry="2.8" fill="#4c4c4e"/><path d="M510.2 212.6 l-2 4.8 h4z" fill="#464648"/><path d="M499 212.6 L506 214.4 L505.2 219 L500 217.6Z M521 212.6 L514 214.4 L514.8 219 L520 217.6Z" fill="#7c7c7e" opacity="0.7" filter="url(#b05)"/><path d="M502.6 225.4 Q510 228 517.4 225.4" stroke="#454547" stroke-width="1.2" fill="none"/><path d="M503.2 222.6 h13.6" stroke="#808082" stroke-width="1.8"/><path d="M505.4 221.6 v2.2 M507.7 221.6 v2.2 M510 221.6 v2.2 M512.3 221.6 v2.2 M514.6 221.6 v2.2" stroke="#545456" stroke-width="0.5"/><path d="M501.8 229 Q510 233 518.2 229 L517.8 232 Q510 235.6 502.2 232Z" fill="#7a7a7c" opacity="0.8"/><path d="M498.4 235.8 Q510 240.6 521.6 235.8 L520.6 239.4 Q510 244 499.4 239.4Z" fill="#2e2e30" filter="url(#b05)"/><path d="M490.8 187 Q492 182.8 497 181.4 L499.9 179.6 L503.4 181.6 L508.6 178.4 L511.7 172 L514.8 178.4 L520 181.8 L523.5 180.4 L526 182.6 Q529 184 529.7 187Z" fill="#5c5c5e"/><path d="M509.2 179 L511.7 172.6 L514.2 179 L513 186 L510.4 186Z" fill="#747476" opacity="0.8"/><path d="M486 191 Q486.2 186.8 491 186.6 L529 186.6 Q533.2 186.8 533.3 191.4 Q533.4 197.4 528 198.6 Q510 201.6 491.4 198.6 Q486 197.4 486 191Z" fill="#57575a"/><path d="M487.4 191.4 Q500 186.4 512 191.6 Q522 195.6 532 191 M489 196.4 Q500 191.4 511 195.6 Q521 199 530 196" stroke="#6e6e70" stroke-width="1.3" fill="none" opacity="0.85" filter="url(#b05)"/><path d="M487 194 Q487.6 198 492 198.8 Q510 201.6 527.6 198.8 Q532.4 198 533 194 Q510 200.4 487 194Z" fill="#434345" opacity="0.8"/></g><path d="M435.6 357.6 L464 357.6" stroke="#9a1a14" stroke-width="0.9"/><path d="M502.6 367.5 l1.1 4.6" stroke="#3a3ad0" stroke-width="0.8"/><path d="M493 505 L492.6 540" stroke="#2fae2f" stroke-width="1"/><path d="M492.6 540 L493.8 565" stroke="#3030b0" stroke-width="0.9"/><circle cx="763" cy="353" r="4.6" fill="none" stroke="#8c1410" stroke-width="1"/><rect x="81.1" y="122.6" width="753.9" height="426.2" fill="none" stroke="url(#gfr)" stroke-width="0.9"/><rect x="81.6" y="123.6" width="69" height="42.8" fill="#fff"/><g fill="#000"><ellipse cx="120.6" cy="134.6" rx="2.6" ry="3.6"/><path d="M104 136 L117 136.2 L124 136.4 L136.5 137.4 L136.5 138.2 L132.6 138 L132.4 143.2 L129 143 L124.4 145.5 L123.2 150 L122 159 L116 158.8 L116.6 148 L117 140.6 L112 142 L107.8 143.2 L107.6 137 L104 136.8Z"/><rect x="117" y="158.5" width="1.5" height="5.6"/><rect x="120" y="158.5" width="1.5" height="5.6"/></g><path d="M803.6 127.2 L823.9 123.4 L823.9 131.9Z" fill="#ff0000"/><circle cx="830.1" cy="127.6" r="4.2" fill="#0000ff"/><path d="M825.8 134.7 L834.6 134.7 L830.3 154.2Z" fill="#00ee00"/><g>
<path d="M788 164 L805.5 164 L803.5 178 L790 178Z" fill="#5c5c5c"/><path d="M785 171 L790 176 L803 176 L808.5 171 L804.7 187.3 L789.3 187.3Z" fill="#bdbdbd"/>
<path d="M790 176 L803 176 L804.7 187.3 L789.3 187.3Z" fill="#d6d6d6"/>
<path d="M783.6 151 L785.6 150 L786 158 L784.4 157Z M809.8 151 L807.8 150 L807.4 158 L809 157Z" fill="#8a8a8a"/>
<path d="M791 136.2 L802 136.2 L806.8 141 L808 152 L806 165 L801.5 174.5 L792 174.5 L787 165 L785.2 152 L786.4 141Z" fill="#8e8e8e"/>
<path d="M792 136.5 L801 136.5 L799 149 L794.2 149Z" fill="#cfcfcf"/>
<path d="M786.4 141 L792 136.5 L794.2 149 L786 151Z" fill="#9a9a9a"/>
<path d="M801 136.5 L806.8 141 L807.4 151 L799 149Z" fill="#7a7a7a"/>
<path d="M794.6 149 L798.6 149 L799 158 L794.4 158Z" fill="#c4c4c4"/>
<path d="M786 151 L794.2 149.6 L794 153 L787 154Z M799 149.6 L807.4 151 L806.6 154 L799.2 153Z" fill="#5c5c5c"/>
<path d="M787 156 L794 158.5 L793 170 L789 165Z" fill="#a2a2a2"/>
<path d="M799.4 158.5 L806.4 156 L805 165 L800.6 170Z" fill="#6a6a6a"/>
<path d="M794.4 158 L799 158 L800 160 L793.6 160Z" fill="#4e4e4e"/>
<path d="M793.8 160.5 L799.8 160.5 L800.4 169 L793.2 169Z" fill="#9c9c9c"/>
<path d="M793 169.6 L800.6 169.6 L799.6 171.4 L794 171.4Z" fill="#4a4a4a"/>
<path d="M792 171.5 L801.5 171.5 L801.5 174.5 L792 174.5Z" fill="#7c7c7c"/>
</g></svg>
<svg width="1024" height="576" viewBox="0 0 1024 576"><rect x="424" y="570.8" width="26" height="2.6" fill="#4a4a4a"/><rect x="466" y="570.8" width="26" height="2.6" fill="#4a4a4a"/><path d="M452.5 573.6 l3 -3.4 l3 3.4z" fill="#cfcfcf"/><path d="M458.6 570.4 h6 l-3 3.4z" fill="#cfcfcf"/></svg>
<div class="a" style="left:857.7px;top:68px;width:23.6px;height:24px;background:#343434;border-radius:2px;box-shadow:inset 0 0 0 1px #262626;"></div>
<span class="t" style="left:857.7px;top:92.9px;font-size:8px;line-height:10px;color:#d0d0d0;width:28.78px;text-align:center;">SPix 3</span>
<div class="a" style="left:858px;top:102.7px;width:23px;height:0.7px;background:#505050;border-radius:0px;"></div>
<div class="a" style="left:864px;top:101.6px;width:7.5px;height:2.8px;background:#fa9222;border-radius:1.4px;"></div>
<div class="a" style="left:857.7px;top:107px;width:23.6px;height:23.3px;background:#343434;border-radius:2px;box-shadow:inset 0 0 0 1px #262626;"></div>
<span class="t" style="left:857.7px;top:119.6px;font-size:5.8px;line-height:7.8px;color:#b4b4b4;width:28.78px;text-align:center;">Scroll</span>
<div class="a" style="left:857.7px;top:132.6px;width:23.6px;height:23.2px;background:#343434;border-radius:2px;box-shadow:inset 0 0 0 1px #262626;"></div>
<span class="t" style="left:857.7px;top:145.1px;font-size:5.8px;line-height:7.8px;color:#b4b4b4;width:28.78px;text-align:center;">Zoom</span>
<div class="a" style="left:857.7px;top:158.2px;width:23.6px;height:23.3px;background:#343434;border-radius:2px;box-shadow:inset 0 0 0 1px #262626;"></div>
<span class="t" style="left:857.7px;top:170.8px;font-size:5.8px;line-height:7.8px;color:#b4b4b4;width:28.78px;text-align:center;">Actual</span>
<div class="a" style="left:857.7px;top:183.8px;width:23.6px;height:23.2px;background:#343434;border-radius:2px;box-shadow:inset 0 0 0 1px #262626;"></div>
<span class="t" style="left:857.7px;top:196.3px;font-size:5.8px;line-height:7.8px;color:#b4b4b4;width:28.78px;text-align:center;">AAHalf</span>
<div class="a" style="left:857.7px;top:209.4px;width:23.6px;height:23.2px;background:#fa9222;border-radius:2px;"></div>
<span class="t" style="left:857.7px;top:221.9px;font-size:5.8px;line-height:7.8px;color:#3a2206;width:28.78px;text-align:center;">Persp</span>
<div class="a" style="left:857.7px;top:234.6px;width:23.6px;height:23.4px;background:#fa9222;border-radius:2px;"></div>
<span class="t" style="left:857.7px;top:247.3px;font-size:5.8px;line-height:7.8px;color:#3a2206;width:28.78px;text-align:center;">Floor</span>
<div class="a" style="left:857.7px;top:261px;width:23.6px;height:23px;background:#343434;border-radius:2px;box-shadow:inset 0 0 0 1px #262626;"></div>
<span class="t" style="left:857.7px;top:273.3px;font-size:5.8px;line-height:7.8px;color:#b4b4b4;width:28.78px;text-align:center;">L.Sym</span>
<div class="a" style="left:857.7px;top:286.2px;width:23.6px;height:22.2px;background:#343434;border-radius:2px;box-shadow:inset 0 0 0 1px #262626;"></div>
<div class="a" style="left:857.7px;top:311.8px;width:23.6px;height:10.6px;background:#fa9222;border-radius:2px;"></div>
<span class="t" style="left:857.7px;top:313.6px;font-size:6px;line-height:8px;color:#3a2206;font-weight:bold;width:28.78px;text-align:center;">XYZ</span>
<div class="a" style="left:857.7px;top:349.6px;width:23.6px;height:23px;background:#343434;border-radius:2px;box-shadow:inset 0 0 0 1px #262626;"></div>
<span class="t" style="left:857.7px;top:361.9px;font-size:5.8px;line-height:7.8px;color:#b4b4b4;width:28.78px;text-align:center;">Frame</span>
<div class="a" style="left:857.7px;top:375.3px;width:23.6px;height:22.9px;background:#343434;border-radius:2px;box-shadow:inset 0 0 0 1px #262626;"></div>
<span class="t" style="left:857.7px;top:387.5px;font-size:5.8px;line-height:7.8px;color:#b4b4b4;width:28.78px;text-align:center;">Move</span>
<div class="a" style="left:857.7px;top:401.3px;width:23.6px;height:22.7px;background:#343434;border-radius:2px;box-shadow:inset 0 0 0 1px #262626;"></div>
<span class="t" style="left:857.7px;top:413.3px;font-size:5.8px;line-height:7.8px;color:#b4b4b4;width:28.78px;text-align:center;">Zoom3D</span>
<div class="a" style="left:857.7px;top:426.5px;width:23.6px;height:23.2px;background:#343434;border-radius:2px;box-shadow:inset 0 0 0 1px #262626;"></div>
<span class="t" style="left:857.7px;top:439px;font-size:5.8px;line-height:7.8px;color:#b4b4b4;width:28.78px;text-align:center;">Rotate</span>
<span class="t" style="left:856.7px;top:450.7px;font-size:5.6px;line-height:7.6px;color:#d8d8d8;font-weight:bold;width:31.22px;text-align:center;">Line Fill</span>
<span class="t" style="left:857.7px;top:466.6px;font-size:5.8px;line-height:7.8px;color:#b4b4b4;width:28.78px;text-align:center;">PolyF</span>
<div class="a" style="left:857.7px;top:477.8px;width:23.6px;height:22.6px;background:#2d2d2d;border-radius:2px;box-shadow:inset 0 0 0 1px #262626;"></div>
<span class="t" style="left:857.7px;top:489.7px;font-size:5.8px;line-height:7.8px;color:#b8b8b8;width:28.78px;text-align:center;">Transp</span>
<div class="a" style="left:857.7px;top:503px;width:23.6px;height:24.2px;background:#8c5a28;border-radius:2px;"></div>
<span class="t" style="left:857.7px;top:516.5px;font-size:5.8px;line-height:7.8px;color:#5e3a14;width:28.78px;text-align:center;">Ghost</span>
<div class="a" style="left:857.7px;top:528.6px;width:23.6px;height:23px;background:#2c2c2c;border-radius:2px;box-shadow:inset 0 0 0 1px #262626;"></div>
<span class="t" style="left:856.7px;top:527.7px;font-size:5.4px;line-height:7.4px;color:#707070;font-weight:bold;width:31.22px;text-align:center;">Dynamic</span>
<span class="t" style="left:857.7px;top:543.1px;font-size:5.8px;line-height:7.8px;color:#9a9a9a;width:28.78px;text-align:center;">Solo</span>
<div class="a" style="left:857.7px;top:554.6px;width:23.6px;height:25.4px;background:#323232;border-radius:2px;box-shadow:inset 0 0 0 1px #262626;"></div>
<span class="t" style="left:857.7px;top:567.6px;font-size:5.8px;line-height:7.8px;color:#8c8c8c;width:28.78px;text-align:center;">Xpose</span>
<svg width="1024" height="576" viewBox="0 0 1024 576"><defs><radialGradient id="gbpr" cx="0.4" cy="0.35" r="0.7"><stop offset="0" stop-color="#b0b0b0"/><stop offset="0.6" stop-color="#6e6e6e"/><stop offset="1" stop-color="#3c3c3c"/></radialGradient></defs><rect x="863" y="71" width="15" height="16" fill="#4a4a4a"/><circle cx="868.3" cy="78.5" r="7" fill="url(#gbpr)"/><g fill="#e0e0e0"><path d="M864.5 118 l-2 -3.5 l1 -0.8 l1.3 1.5 l-0.6 -4 l1.2 -0.3 l0.8 3 l0.2 -3.6 l1.3 0 l0.3 3.6 l0.9 -3 l1.2 0.4 l-0.7 4.6 c0 2 -0.6 3 -1.6 3.6 h-2.6z"/></g><rect x="871" y="110" width="6.2" height="6.6" fill="#6e6e6e" stroke="#d4d4d4" stroke-width="0.6"/><path d="M874.1 111.2 v4.2 M872.4 113.3 h3.4" stroke="#d4d4d4" stroke-width="0.6"/><g transform="translate(0 -0.8)"><circle cx="867.6" cy="140.5" r="2.7" fill="none" stroke="#e0e0e0" stroke-width="0.8"/><path d="M865.8 142.7 l-3.8 3.8" stroke="#e0e0e0" stroke-width="1.2"/><rect x="871.3" y="137.3" width="6.2" height="5.6" fill="#6e6e6e" stroke="#d4d4d4" stroke-width="0.6"/><rect x="873" y="138.9" width="2.8" height="2.4" fill="#cfcfcf"/></g><g transform="translate(0 -0.8)"><circle cx="867.6" cy="166.5" r="2.7" fill="none" stroke="#e0e0e0" stroke-width="0.8"/><path d="M865.8 168.7 l-3.8 3.8" stroke="#e0e0e0" stroke-width="1.2"/><rect x="871.3" y="163.3" width="6.2" height="5.6" fill="#6e6e6e" stroke="#d4d4d4" stroke-width="0.6"/><rect x="873" y="164.9" width="2.8" height="2.4" fill="#cfcfcf"/></g><g transform="translate(0 -0.8)"><circle cx="867.6" cy="192" r="2.7" fill="none" stroke="#e0e0e0" stroke-width="0.8"/><path d="M865.8 194.2 l-3.8 3.8" stroke="#e0e0e0" stroke-width="1.2"/><rect x="871.3" y="188.8" width="6.2" height="5.6" fill="#6e6e6e" stroke="#d4d4d4" stroke-width="0.6"/><rect x="873" y="190.4" width="2.8" height="2.4" fill="#cfcfcf"/></g><g transform="translate(0 -1.8)" stroke="#3a2206" stroke-width="0.7" fill="none"><path d="M863 216.5 h13 M861.5 221.5 h16 M864 216.5 l-2.5 5 M875 216.5 l2.5 5 M869.5 214.5 v8 M866.7 216.5 l-1 5 M872.3 216.5 l1 5"/></g><g stroke="#3a2206" stroke-width="1" fill="none"><path d="M862 246.6 h15 M869.5 241.5 v3.5"/></g><path d="M867.5 244 h4 l-2 2.2z" fill="#3a2206"/><path d="M866.5 237.5 h1.5 l0.7 1 l0.7 -1 h1.5" stroke="#fff" stroke-width="0.7" fill="none"/><g transform="translate(0 -1.2)" stroke="#c8c8c8" stroke-width="0.8" fill="#c8c8c8"><path d="M861.5 271.5 h16" fill="none"/><circle cx="864.5" cy="271.5" r="1.1"/><circle cx="874.5" cy="271.5" r="1.1"/><path d="M869.5 268 v6" fill="none"/></g><g transform="translate(0 -2)"><ellipse cx="868" cy="299" rx="5.5" ry="3" fill="none" stroke="#bdbdbd" stroke-width="0.8"/><rect x="869.5" y="295.5" width="6.5" height="5.5" rx="0.8" fill="#e0e0e0"/><path d="M871 295.5 v-2 a1.8 1.8 0 0 1 3.6 0 v2" fill="none" stroke="#e0e0e0" stroke-width="1"/></g><g fill="none" stroke="#cfcfcf" stroke-width="0.8"><path d="M866.2 331.5 a2.6 2.6 0 1 1 2.2 1.2"/><path d="M874.4 343.5 a2.6 2.6 0 1 0 -2.2 1.2"/></g><path d="M867.3 331 l1 2.6 l1.2 -1.8z M874.2 345.8 l-2.6 -0.8 l1.8 -1.4z" fill="#cfcfcf"/><path d="M867.5 314.3 a1.6 1.6 0 1 1 1.6 1.4" fill="none" stroke="#3a2206" stroke-width="0.6"/><g stroke="#d8d8d8" stroke-width="0.8" fill="none"><path d="M864.5 356.2 v-1.8 h1.8 M872.7 354.4 h1.8 v1.8 M874.5 360.6 v1.8 h-1.8 M866.3 362.4 h-1.8 v-1.8"/></g><circle cx="869.5" cy="358.4" r="1.3" fill="#d8d8d8"/><circle cx="872" cy="383" r="3.2" fill="#8e8e8e"/><g fill="#e6e6e6" transform="translate(866 386) scale(0.85) translate(-866 -387.6)"><path d="M864.5 390 l-2 -3.5 l1 -0.8 l1.3 1.5 l-0.6 -4 l1.2 -0.3 l0.8 3 l0.2 -3.6 l1.3 0 l0.3 3.6 l0.9 -3 l1.2 0.4 l-0.7 4.6 c0 2 -0.6 3 -1.6 3.6 h-2.6z"/></g><g transform="translate(0 -1)"><circle cx="872.5" cy="409" r="3.3" fill="#8e8e8e"/><circle cx="870.6" cy="409.6" r="2.8" fill="none" stroke="#e6e6e6" stroke-width="0.9"/><path d="M868.6 411.6 l-5.6 4.6" stroke="#e6e6e6" stroke-width="1.3"/></g><g transform="translate(869.5 436) scale(0.82) translate(-869.5 -438.6)"><circle cx="870.5" cy="436.5" r="3.8" fill="#8e8e8e"/><path d="M864.5 440 a6.5 5.5 0 1 1 9.5 1.8" fill="none" stroke="#e6e6e6" stroke-width="1.2"/><path d="M875.8 439.5 l-3.4 3.2 l-0.2 -3.6z" fill="#e6e6e6"/></g><g stroke="#d0d0d0" stroke-width="0.7" fill="none"><rect x="863" y="458" width="13" height="9"/><path d="M867.3 458 v9 M871.6 458 v9 M863 462.5 h13"/></g><rect x="867" y="481.5" width="8.5" height="7.5" fill="none" stroke="#8a8a8a" stroke-width="0.7"/><circle cx="867.5" cy="487.6" r="3.2" fill="#8e8e8e"/><g stroke="#5e3a14" stroke-width="0.8" fill="none"><circle cx="869.4" cy="511.6" r="3.8"/><path d="M864.6 516.4 l9.6 -9.6"/></g><circle cx="866.5" cy="540" r="2.8" fill="#9a9a9a"/><circle cx="872.5" cy="540" r="2.8" fill="#9a9a9a"/><circle cx="869.5" cy="537.5" r="3.3" fill="#ededed"/><g stroke="#d8d8d8" stroke-width="0.8" fill="none"><path d="M864.5 561.2 v-1.8 h1.8 M872.7 559.4 h1.8 v1.8 M874.5 565.6 v1.8 h-1.8 M866.3 567.4 h-1.8 v-1.8"/></g><circle cx="869.5" cy="563.4" r="1.3" fill="#d8d8d8"/></svg>
<span class="t" style="left:864.2px;top:83.4px;font-size:5.8px;line-height:7.8px;color:#d8d8d8;font-weight:bold;">BPR</span>
<span class="t" style="left:860.3px;top:207.1px;font-size:5.4px;line-height:7.4px;color:#fff;font-weight:bold;width:24.39px;text-align:center;">Dynamic</span>
<div class="a" style="left:885px;top:260px;width:3.4px;height:28px;background:#333;border-radius:1px;"></div>
<div class="a" style="left:885px;top:300px;width:3.4px;height:28px;background:#333;border-radius:1px;"></div>
<svg width="1024" height="576" viewBox="0 0 1024 576"><path d="M889 291.4 l-3.6 -2.4 v4.8z M889 296.8 l-3.6 -2.4 v4.8z" fill="#555"/></svg>
<svg width="1024" height="576" viewBox="0 0 1024 576"><g stroke="#c8c8c8" stroke-width="1.1" fill="none" stroke-linecap="round"><path d="M896.5 15.5 l5 7"/><path d="M893.5 18.5 l4.5 -4 l3.5 1"/></g><g stroke="#d8d8d8" stroke-width="1" fill="none"><path d="M1008.8 17 a2.4 2.4 0 1 0 2.6 -0.2"/></g><path d="M1007.8 15.3 l2.6 0.4 l-1.5 2z" fill="#d8d8d8"/></svg>
<span class="t" style="left:906.4px;top:13.6px;font-size:9.2px;line-height:11.2px;color:#e4e4e4;transform:scaleX(.9);">Tool</span>
<div class="a" style="left:903.6px;top:27.4px;width:106.8px;height:209.1px;background:#2e2e2e;border-radius:4px;box-shadow:inset 0 0 0 1px #1c1c1c;"></div>
<div class="a" style="left:906.4px;top:30.5px;width:49.9px;height:11.2px;background:#3c3c3c;border-radius:2px;box-shadow:inset 0 0 0 1px #242424;"></div>
<span class="t" style="left:908.5px;top:31.1px;font-size:8px;line-height:10px;color:#d4d4d4;">Load Tool</span>
<div class="a" style="left:957.5px;top:30.5px;width:50.1px;height:11.2px;background:#3c3c3c;border-radius:2px;box-shadow:inset 0 0 0 1px #242424;"></div>
<span class="t" style="left:959.6px;top:31.1px;font-size:8px;line-height:10px;color:#d4d4d4;">Save As</span>
<div class="a" style="left:906.4px;top:43.4px;width:101.2px;height:11.2px;background:#3c3c3c;border-radius:2px;box-shadow:inset 0 0 0 1px #242424;"></div>
<span class="t" style="left:908.5px;top:44px;font-size:8px;line-height:10px;color:#d4d4d4;">Load Tools From Project</span>
<div class="a" style="left:906.4px;top:56.2px;width:49.9px;height:11.2px;background:#3c3c3c;border-radius:2px;box-shadow:inset 0 0 0 1px #242424;"></div>
<span class="t" style="left:908.5px;top:56.8px;font-size:8px;line-height:10px;color:#d4d4d4;">Copy Tool</span>
<div class="a" style="left:957.5px;top:56.2px;width:50.1px;height:11.2px;background:#313131;border-radius:2px;box-shadow:inset 0 0 0 1px #242424;"></div>
<span class="t" style="left:959.6px;top:56.8px;font-size:8px;line-height:10px;color:#5c5c5c;">Paste Tool</span>
<div class="a" style="left:906.4px;top:69px;width:49.9px;height:11.2px;background:#3c3c3c;border-radius:2px;box-shadow:inset 0 0 0 1px #242424;"></div>
<span class="t" style="left:908.5px;top:69.6px;font-size:8px;line-height:10px;color:#d4d4d4;">Import</span>
<div class="a" style="left:957.5px;top:69px;width:50.1px;height:11.2px;background:#3c3c3c;border-radius:2px;box-shadow:inset 0 0 0 1px #242424;"></div>
<span class="t" style="left:959.6px;top:69.6px;font-size:8px;line-height:10px;color:#d4d4d4;">Export</span>
<div class="a" style="left:906.4px;top:81.8px;width:24.2px;height:11.2px;background:#3c3c3c;border-radius:2px;box-shadow:inset 0 0 0 1px #242424;"></div>
<span class="t" style="left:908.5px;top:82.4px;font-size:8px;line-height:10px;color:#d4d4d4;">Clone</span>
<div class="a" style="left:931.7px;top:81.8px;width:75.9px;height:11.2px;background:#3c3c3c;border-radius:2px;box-shadow:inset 0 0 0 1px #242424;"></div>
<span class="t" style="left:933.8px;top:82.4px;font-size:8px;line-height:10px;color:#d4d4d4;">Make PolyMesh3D</span>
<div class="a" style="left:906.4px;top:94.7px;width:24.2px;height:11.2px;background:#3c3c3c;border-radius:2px;box-shadow:inset 0 0 0 1px #242424;"></div>
<span class="t" style="left:908.5px;top:95.3px;font-size:8px;line-height:10px;color:#d4d4d4;">GoZ</span>
<div class="a" style="left:931.7px;top:94.7px;width:24.2px;height:11.2px;background:#3c3c3c;border-radius:2px;box-shadow:inset 0 0 0 1px #242424;"></div>
<span class="t" style="left:933.8px;top:95.3px;font-size:8px;line-height:10px;color:#d4d4d4;">All</span>
<div class="a" style="left:957.5px;top:94.7px;width:36.8px;height:11.2px;background:#3c3c3c;border-radius:2px;box-shadow:inset 0 0 0 1px #242424;"></div>
<span class="t" style="left:959.6px;top:95.3px;font-size:8px;line-height:10px;color:#d4d4d4;">Visible</span>
<div class="a" style="left:995.5px;top:94.7px;width:12.1px;height:11.2px;background:#3c3c3c;border-radius:2px;box-shadow:inset 0 0 0 1px #242424;"></div>
<span class="t" style="left:998.8px;top:95.3px;font-size:8px;line-height:10px;color:#d4d4d4;">R</span>
<div class="a" style="left:906.4px;top:107.5px;width:101.2px;height:11.3px;background:#3c3c3c;border-radius:2px;box-shadow:inset 0 0 0 1px #242424;"></div>
<span class="t" style="left:908.5px;top:108.15px;font-size:8px;line-height:10px;color:#d4d4d4;">Lightbox▶Tools</span>
<span class="t" style="left:908.3px;top:119.7px;font-size:8px;line-height:10px;color:#d4d4d4;">PM3D_Cylinder3D1_2. 53</span>
<div class="a" style="left:907px;top:129.7px;width:86.5px;height:0.7px;background:#555;border-radius:0px;"></div>
<div class="a" style="left:985px;top:128.6px;width:8.5px;height:3px;background:#fa9222;border-radius:1.5px;"></div>
<div class="a" style="left:995.5px;top:120.5px;width:12.1px;height:11.2px;background:#3c3c3c;border-radius:2px;box-shadow:inset 0 0 0 1px #242424;"></div>
<span class="t" style="left:998.8px;top:121.1px;font-size:8px;line-height:10px;color:#d4d4d4;">R</span>
<div class="a" style="left:906.8px;top:133.4px;width:49.3px;height:49.2px;background:#363634;border-radius:2px;box-shadow:inset 0 0 0 1px #1c1c1c;"></div>
<div class="a" style="left:958px;top:133.4px;width:49.5px;height:23.4px;background:#363634;border-radius:2px;box-shadow:inset 0 0 0 1px #222;"></div>
<div class="a" style="left:958px;top:158.5px;width:49.5px;height:24px;background:#303030;border-radius:2px;box-shadow:inset 0 0 0 1px #292929;"></div>
<div class="a" style="left:906.8px;top:184.4px;width:49.2px;height:22.9px;background:#303030;border-radius:2px;box-shadow:inset 0 0 0 1px #292929;"></div>
<div class="a" style="left:958px;top:184.4px;width:49.5px;height:22.9px;background:#303030;border-radius:2px;box-shadow:inset 0 0 0 1px #292929;"></div>
<div class="a" style="left:906.8px;top:209.7px;width:49.2px;height:23.3px;background:#303030;border-radius:2px;box-shadow:inset 0 0 0 1px #292929;"></div>
<div class="a" style="left:907.6px;top:174.6px;width:47.7px;height:7.2px;background:#2e2e2e;border-radius:1px;"></div>
<div class="a" style="left:958.8px;top:148.8px;width:47.9px;height:7.2px;background:#2e2e2e;border-radius:1px;"></div>
<div class="a" style="left:907.5px;top:173.4px;width:47.7px;height:10px;overflow:hidden"><span class="t" style="left:0;top:0;font-size:8px;line-height:10px;color:#d0d0d0;width:63.6px;text-align:center;transform:scaleX(0.75)">PM3D_Cylinder3</span></div>
<div class="a" style="left:958.8px;top:148px;width:48.0px;height:10px;overflow:hidden"><span class="t" style="left:0;top:0;font-size:8px;line-height:10px;color:#d0d0d0;width:64px;text-align:center;transform:scaleX(0.75)">PM3D_Cylinder3</span></div>
<div class="a" style="left:958px;top:173.8px;width:49.6px;height:10px;overflow:hidden"><span class="t" style="left:0;top:0;font-size:8px;line-height:10px;color:#d0d0d0;width:62px;text-align:center;transform:scaleX(0.8)">AlphaBrush</span></div>
<div class="a" style="left:906.7px;top:199.2px;width:49.3px;height:10px;overflow:hidden"><span class="t" style="left:0;top:0;font-size:8px;line-height:10px;color:#d0d0d0;width:61.62px;text-align:center;transform:scaleX(0.8)">SimpleBrush</span></div>
<div class="a" style="left:958px;top:199.2px;width:49.6px;height:10px;overflow:hidden"><span class="t" style="left:0;top:0;font-size:8px;line-height:10px;color:#d0d0d0;width:62px;text-align:center;transform:scaleX(0.8)">EraserBrush</span></div>
<div class="a" style="left:906.7px;top:224.6px;width:49.3px;height:10px;overflow:hidden"><span class="t" style="left:0;top:0;font-size:8px;line-height:10px;color:#d0d0d0;width:61.62px;text-align:center;transform:scaleX(0.8)">skulltool</span></div>
<span class="t" style="left:950.6px;top:133.85px;font-size:7.5px;line-height:9.5px;color:#d0d0d0;">9</span>
<span class="t" style="left:1002px;top:133.85px;font-size:7.5px;line-height:9.5px;color:#d0d0d0;">9</span>
<svg width="1024" height="576" viewBox="0 0 1024 576">
<defs><linearGradient id="gcr" x1="0" y1="0" x2="0" y2="1"><stop offset="0" stop-color="#ffffff"/><stop offset="0.55" stop-color="#ececec"/><stop offset="1" stop-color="#b4b4b4"/></linearGradient>
<linearGradient id="gcone" x1="0" y1="0" x2="1" y2="0"><stop offset="0" stop-color="#bcbcbc"/><stop offset="0.5" stop-color="#e2e2e2"/><stop offset="1" stop-color="#c4c4c4"/></linearGradient>
<radialGradient id="galpha" cx="0.35" cy="0.3" r="0.8"><stop offset="0" stop-color="#9aaaff"/><stop offset="0.5" stop-color="#3a4ec8"/><stop offset="1" stop-color="#141e78"/></radialGradient>
<radialGradient id="gsk" cx="0.4" cy="0.3" r="0.75"><stop offset="0" stop-color="#ffffff"/><stop offset="0.6" stop-color="#d0d0d0"/><stop offset="1" stop-color="#808080"/></radialGradient>
<linearGradient id="ggold" x1="0" y1="0" x2="1" y2="1"><stop offset="0" stop-color="#ffd23a"/><stop offset="0.5" stop-color="#ff9a10"/><stop offset="1" stop-color="#c85a00"/></linearGradient>
<g id="crownshape">
<path d="M919.5 158.5 Q932 163.5 944.5 158.5 L932.2 167Z" fill="url(#gcone)"/>
<path d="M910.6 151.8 Q916 149.6 919 145 Q920.6 149.6 925 149.6 Q930 148.4 932.1 137 Q934 148.4 939 149.6 Q943 149.6 944.3 145.6 Q947 149.6 950.9 151.8 L950.4 157 Q932 164 911 157 Z" fill="url(#gcr)"/>
<path d="M911 154.4 Q932 161.4 950.6 154.4 L950.4 157.2 Q932 164.2 911 157.2Z" fill="#a8a8a8"/>
</g>
</defs>
<use href="#crownshape"/>
<g transform="translate(982.8 141.2) scale(0.43 0.4) rotate(-6) translate(-931 -151)"><use href="#crownshape"/></g>
<g transform="rotate(38 982 166.5)"><ellipse cx="986" cy="166.5" rx="6.2" ry="5.2" fill="#1c2a90"/><ellipse cx="983" cy="166.5" rx="6.6" ry="5.2" fill="url(#galpha)"/><ellipse cx="979" cy="166.5" rx="5.2" ry="4" fill="#7486f0"/><ellipse cx="977.4" cy="166" rx="3" ry="2.2" fill="#c8d0ff"/></g>
<path d="M935.6 187.4 c-3.4 -2.6 -8.6 -1 -8.4 2.8 c0.2 3.4 6.6 3 7.2 6 c0.3 1.8 -2.6 2.4 -4.2 0.8 c-1 -2.6 -5 -1.4 -3.8 1.4 c1.4 3.4 9.4 3.4 12 -0.6 c2.4 -4.2 -5.6 -6 -6.4 -8 c-0.4 -1.4 2.2 -1.2 3 -0.4 c1.4 0.8 2 -0.8 0.6 -2z" fill="url(#ggold)" stroke="#b85000" stroke-width="0.6"/>
<path d="M976.6 198 c-3.6 -5 -1.8 -11.4 4.6 -12.8 c6.2 -1.2 10.6 3.4 10 8.6 c-0.4 3 -2.2 5 -3.8 5.4 c1 -1.6 0.8 -3 -0.2 -3.8 c0.4 -3.4 -2.6 -5.8 -5.8 -5.4 c-3.6 0.6 -5 3.6 -3.6 6.4 c-1.2 -0.2 -1.8 0.6 -1.2 1.6z" fill="#b8622c" stroke="#6a3010" stroke-width="0.6"/>
<path d="M924.5 217 c0 -3.8 3 -6.2 6.4 -6.2 c3.6 0 6.6 2.4 6.8 5.8 c0.2 2.2 -0.6 3.4 -0.4 4.6 l0.8 2.2 l-2.2 2.2 l-3.4 0 l-2.2 -1.6 l-0.4 -2.2 c-3 -0.4 -5.4 -2 -5.4 -4.8z" fill="url(#gsk)"/>
<ellipse cx="932" cy="218.8" rx="1.5" ry="1.7" fill="#5a5a5a"/><ellipse cx="936.2" cy="219.4" rx="1.1" ry="1.5" fill="#5a5a5a"/><path d="M934.4 221 l-0.5 1.6 h1.2z" fill="#666"/><path d="M931.4 223.6 l4.8 0.6" stroke="#888" stroke-width="0.6"/>
</svg>
<div class="a" style="left:903.6px;top:241.8px;width:107px;height:331.6px;background:#2e2e2e;border-radius:4px;box-shadow:inset 0 0 0 1px #1c1c1c;"></div>
<span class="t" style="left:911px;top:242.7px;font-size:8px;line-height:10px;color:#e0e0e0;">Subtool</span>
<span class="t" style="left:908.5px;top:252.5px;font-size:8px;line-height:10px;color:#d4d4d4;">Visible Count 4</span>
<div class="a" style="left:907.5px;top:262.2px;width:99.5px;height:0.7px;background:#505050;border-radius:0px;"></div>
<div class="a" style="left:918px;top:261px;width:8px;height:3px;background:#fa9222;border-radius:1.5px;"></div>
<div class="a" style="left:908.5px;top:265px;width:3px;height:99px;background:#242424;border-radius:1px;"></div>
<div class="a" style="left:908.5px;top:346.6px;width:3px;height:7.4px;background:#fa9222;border-radius:1px;"></div>
<div class="a" style="left:915.2px;top:290.6px;width:92.8px;height:25.6px;background:#2a2a2a;border-radius:2px;"></div>
<div class="a" style="left:915.2px;top:290.6px;width:92.8px;height:16.4px;background:#3b3b38;border-radius:2px;"></div>
<div class="a" style="left:915.2px;top:290.6px;width:92.8px;height:25.6px;background:transparent;border-radius:2px;box-shadow:inset 0 0 0 1px #151515;"></div>
<div class="a" style="left:915px;top:316.2px;width:93px;height:0.6px;background:#2a2a2a;border-radius:0px;"></div>
<div class="a" style="left:915px;top:342px;width:93px;height:0.6px;background:#2a2a2a;border-radius:0px;"></div>
<div class="a" style="left:915px;top:367px;width:93px;height:0.6px;background:#2a2a2a;border-radius:0px;"></div>
<span class="t" style="left:930px;top:281px;font-size:8px;line-height:10px;color:#cfcfcf;">PM3D_Cylinder3D1_3</span>
<span class="t" style="left:930px;top:306.5px;font-size:8px;line-height:10px;color:#dcdcdc;">PM3D_Cylinder3D1_2</span>
<svg width="1024" height="576" viewBox="0 0 1024 576"><path d="M944 270.3 l3 -2.5 M944 270.3 l1.5 1.5" stroke="#666" stroke-width="0.8" fill="none"/><circle cx="954.5" cy="269.3" r="2.5" fill="#b8b8b8"/><circle cx="958" cy="269.3" r="2.6" fill="#e8e8e8"/><path d="M968 266.8 a2.6 2.6 0 1 0 0 5 a3.6 3.6 0 0 1 0 -5z" fill="#585858"/><circle cx="979" cy="269.3" r="2.4" fill="none" stroke="#4e4e4e" stroke-width="0.8"/><path d="M979 266.9 v4.8" stroke="#4e4e4e" stroke-width="0.8"/><path d="M987 271.3 l4.5 -4" stroke="#4a4a4a" stroke-width="1.2"/><path d="M997.5 269.8 c2 -3.4 6.5 -3.4 8.5 0 c-2 2.6 -6.5 2.6 -8.5 0z" fill="none" stroke="#e0e0e0" stroke-width="0.9"/><circle cx="1001.8" cy="269.6" r="1.3" fill="#e0e0e0"/><path d="M943.5 295.3 l2 -1.8 v3.6z M945 295.3 h3" stroke="#8a8a8a" stroke-width="0.8" fill="#8a8a8a"/><circle cx="954.5" cy="295.3" r="2.5" fill="#b8b8b8"/><circle cx="958" cy="295.3" r="2.6" fill="#e8e8e8"/><path d="M968 292.8 a2.6 2.6 0 1 0 0 5 a3.6 3.6 0 0 1 0 -5z" fill="#585858"/><circle cx="979" cy="295.3" r="2.4" fill="none" stroke="#4e4e4e" stroke-width="0.8"/><path d="M979 292.9 v4.8" stroke="#4e4e4e" stroke-width="0.8"/><path d="M987 297.3 l4.5 -4" stroke="#4a4a4a" stroke-width="1.2"/><path d="M997.5 295.8 c2 -3.4 6.5 -3.4 8.5 0 c-2 2.6 -6.5 2.6 -8.5 0z" fill="none" stroke="#e0e0e0" stroke-width="0.9"/><circle cx="1001.8" cy="295.6" r="1.3" fill="#e0e0e0"/><defs><linearGradient id="gcy" x1="0" y1="0" x2="1" y2="0"><stop offset="0" stop-color="#d8d8d8"/><stop offset="0.5" stop-color="#ffffff"/><stop offset="1" stop-color="#c4c4c4"/></linearGradient></defs><path d="M920.3 268 l9 -0.8 l2.2 14.8 l-9.4 1.4z" fill="url(#gcy)"/><path d="M917.5 298.5 l3.5 -2.5 l2 1.5 l2.5 -3.2 l3 2.2 l2 -1 l2 3.5 c-0.5 3.5 -4 5.5 -8 5.5 c-3.5 0 -6.5 -2 -7 -6z" fill="#f0f0f0"/><path d="M918.5 300.5 c3 2 9 2 13 -1 c-1 3 -4 4.5 -7.5 4.5 c-2.5 0 -4.5 -1 -5.5 -3.5z" fill="#a8a8a8"/></svg>
<div class="a" style="left:906.2px;top:368.3px;width:49.9px;height:11.2px;background:#3c3c3c;border-radius:2px;box-shadow:inset 0 0 0 1px #242424;"></div>
<span class="t" style="left:908.3px;top:368.9px;font-size:8px;line-height:10px;color:#d4d4d4;">List All</span>
<div class="a" style="left:957.2px;top:368.3px;width:24.9px;height:11.2px;background:#3c3c3c;border-radius:2px;box-shadow:inset 0 0 0 1px #242424;"></div>
<div class="a" style="left:983.5px;top:368.3px;width:24px;height:11.2px;background:#313131;border-radius:2px;box-shadow:inset 0 0 0 1px #242424;"></div>
<div class="a" style="left:906.2px;top:381.1px;width:49.9px;height:11.2px;background:#3c3c3c;border-radius:2px;box-shadow:inset 0 0 0 1px #242424;"></div>
<span class="t" style="left:908.3px;top:381.7px;font-size:8px;line-height:10px;color:#d4d4d4;">New Folder</span>
<div class="a" style="left:957.2px;top:381.1px;width:24.9px;height:11.2px;background:#3c3c3c;border-radius:2px;box-shadow:inset 0 0 0 1px #242424;"></div>
<div class="a" style="left:983.5px;top:381.1px;width:24px;height:11.2px;background:#313131;border-radius:2px;box-shadow:inset 0 0 0 1px #242424;"></div>
<svg width="1024" height="576" viewBox="0 0 1024 576">
<path d="M969.6 371 l2.4 3.5 h-1.6 v2.6 h-1.6 v-2.6 h-1.6z" fill="#e0e0e0"/>
<path d="M995.5 377 l2.4 -3.5 h-1.6 v-2.6 h-1.6 v2.6 h-1.6z" fill="#555"/>
<path d="M966.5 390 v-2.6 c0 -1.2 1 -1.6 2 -1.6 h2 v-1.6 l3 2.4 l-3 2.4 v-1.6 h-2.4 v2.6z" fill="#e0e0e0"/>
<path d="M992.5 384 v2.6 c0 1.2 1 1.6 2 1.6 h2 v1.6 l3 -2.4 l-3 -2.4 v1.6 h-2.4 v-2.6z" fill="#555"/>
</svg>
<div class="a" style="left:906.5px;top:406.3px;width:49.4px;height:11.5px;background:#3c3c3c;border-radius:2px;box-shadow:inset 0 0 0 1px #242424;"></div>
<span class="t" style="left:908.6px;top:407.05px;font-size:8px;line-height:10px;color:#d4d4d4;">Rename</span>
<div class="a" style="left:957.5px;top:406.3px;width:50px;height:11.5px;background:#3c3c3c;border-radius:2px;box-shadow:inset 0 0 0 1px #242424;"></div>
<span class="t" style="left:959.6px;top:407.05px;font-size:8px;line-height:10px;color:#d4d4d4;">AutoReorder</span>
<div class="a" style="left:906.5px;top:419.2px;width:49.4px;height:11.5px;background:#3c3c3c;border-radius:2px;box-shadow:inset 0 0 0 1px #242424;"></div>
<span class="t" style="left:908.6px;top:419.95px;font-size:8px;line-height:10px;color:#d4d4d4;">All Low</span>
<div class="a" style="left:957.5px;top:419.2px;width:50px;height:11.5px;background:#3c3c3c;border-radius:2px;box-shadow:inset 0 0 0 1px #242424;"></div>
<span class="t" style="left:959.6px;top:419.95px;font-size:8px;line-height:10px;color:#d4d4d4;">All High</span>
<div class="a" style="left:906.5px;top:432.1px;width:49.4px;height:11.5px;background:#3c3c3c;border-radius:2px;box-shadow:inset 0 0 0 1px #242424;"></div>
<span class="t" style="left:908.6px;top:432.85px;font-size:8px;line-height:10px;color:#d4d4d4;">Copy</span>
<div class="a" style="left:957.5px;top:432.1px;width:50px;height:11.5px;background:#313131;border-radius:2px;box-shadow:inset 0 0 0 1px #242424;"></div>
<span class="t" style="left:959.6px;top:432.85px;font-size:8px;line-height:10px;color:#5c5c5c;">Paste</span>
<div class="a" style="left:906.5px;top:445px;width:49.4px;height:24.5px;background:#3c3c3c;border-radius:2px;box-shadow:inset 0 0 0 1px #242424;"></div>
<span class="t" style="left:908.6px;top:452.25px;font-size:8px;line-height:10px;color:#d4d4d4;">Duplicate</span>
<div class="a" style="left:957.5px;top:445px;width:50px;height:11.5px;background:#3c3c3c;border-radius:2px;box-shadow:inset 0 0 0 1px #242424;"></div>
<span class="t" style="left:959.6px;top:445.75px;font-size:8px;line-height:10px;color:#d4d4d4;">Append</span>
<div class="a" style="left:957.5px;top:457.3px;width:50px;height:12.2px;background:#3c3c3c;border-radius:2px;box-shadow:inset 0 0 0 1px #242424;"></div>
<span class="t" style="left:959.6px;top:458.4px;font-size:8px;line-height:10px;color:#d4d4d4;">Insert</span>
<div class="a" style="left:906.5px;top:470.2px;width:49.4px;height:24.6px;background:#3c3c3c;border-radius:2px;box-shadow:inset 0 0 0 1px #242424;"></div>
<span class="t" style="left:908.6px;top:477.5px;font-size:8px;line-height:10px;color:#d4d4d4;">Delete</span>
<div class="a" style="left:957.5px;top:470.2px;width:50px;height:11.8px;background:#3c3c3c;border-radius:2px;box-shadow:inset 0 0 0 1px #242424;"></div>
<span class="t" style="left:959.6px;top:471.1px;font-size:8px;line-height:10px;color:#d4d4d4;">Del Other</span>
<div class="a" style="left:957.5px;top:483.1px;width:50px;height:11.7px;background:#3c3c3c;border-radius:2px;box-shadow:inset 0 0 0 1px #242424;"></div>
<span class="t" style="left:959.6px;top:483.95px;font-size:8px;line-height:10px;color:#d4d4d4;">Del All</span>
<span class="t" style="left:908.8px;top:497.3px;font-size:8px;line-height:10px;color:#d8d8d8;">Split</span>
<span class="t" style="left:908.8px;top:510.1px;font-size:8px;line-height:10px;color:#d8d8d8;">Merge</span>
<div class="a" style="left:905px;top:508.5px;width:104px;height:0.6px;background:#262626;border-radius:0px;"></div>
<span class="t" style="left:908.8px;top:522.9px;font-size:8px;line-height:10px;color:#d8d8d8;">Boolean</span>
<div class="a" style="left:905px;top:521.3px;width:104px;height:0.6px;background:#262626;border-radius:0px;"></div>
<span class="t" style="left:908.8px;top:535.7px;font-size:8px;line-height:10px;color:#d8d8d8;">Remesh</span>
<div class="a" style="left:905px;top:534.1px;width:104px;height:0.6px;background:#262626;border-radius:0px;"></div>
<span class="t" style="left:908.8px;top:548.5px;font-size:8px;line-height:10px;color:#d8d8d8;">Project</span>
<div class="a" style="left:905px;top:546.9px;width:104px;height:0.6px;background:#262626;border-radius:0px;"></div>
<span class="t" style="left:908.8px;top:561.3px;font-size:8px;line-height:10px;color:#d8d8d8;">Extract</span>
<div class="a" style="left:905px;top:559.7px;width:104px;height:0.6px;background:#262626;border-radius:0px;"></div>
<div class="a" style="left:905px;top:495.6px;width:104px;height:0.6px;background:#262626;border-radius:0px;"></div>
</body></html>
